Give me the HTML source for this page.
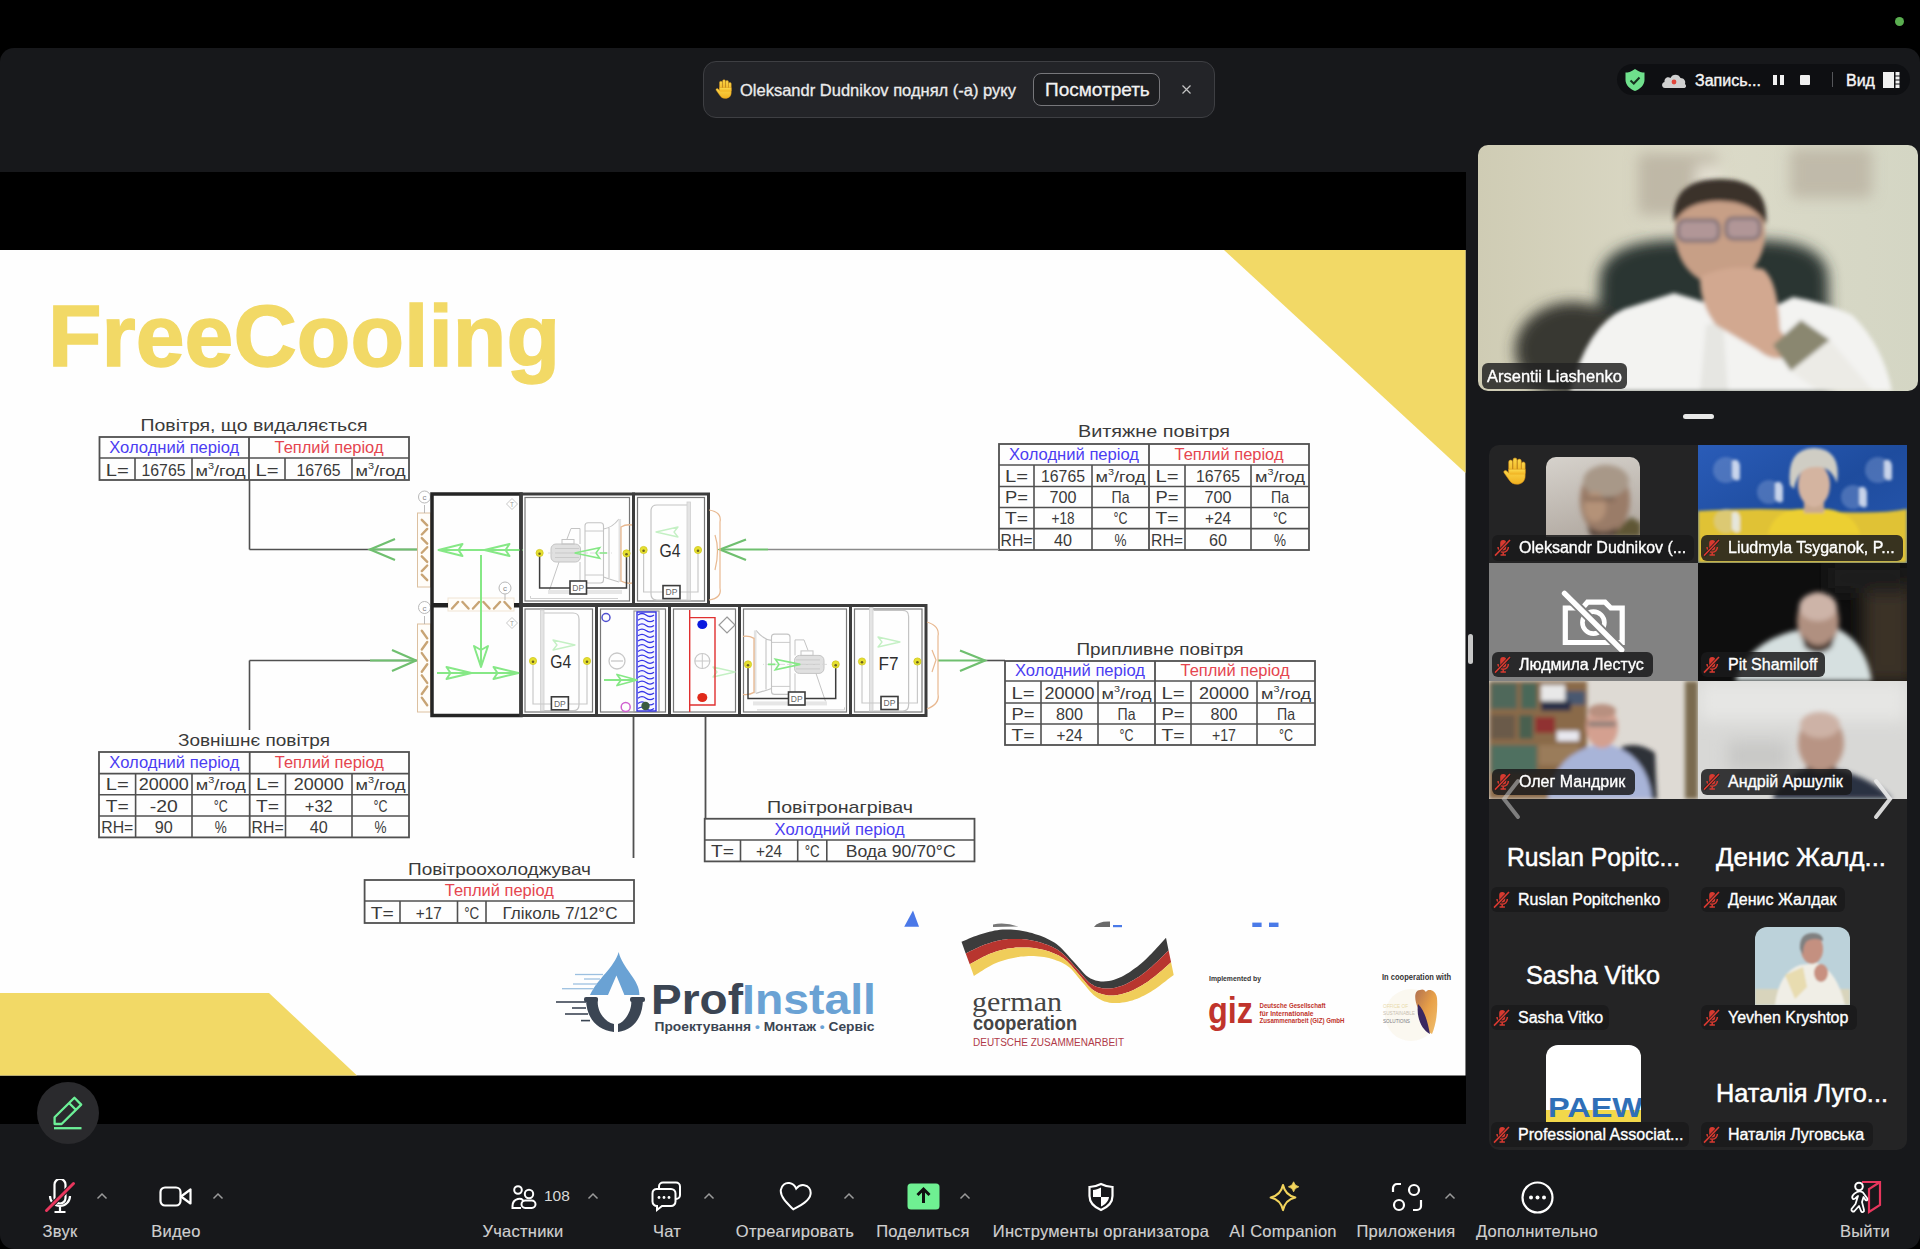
<!DOCTYPE html>
<html><head><meta charset="utf-8">
<style>
html,body{margin:0;padding:0;}
body{width:1920px;height:1249px;background:#000;overflow:hidden;position:relative;font-family:"Liberation Sans", sans-serif;}
.abs{position:absolute;}
.lbl{position:absolute;background:rgba(26,26,27,0.85);border-radius:6px;color:#fff;font-size:16px;line-height:19px;white-space:nowrap;-webkit-text-stroke:0.35px #fff;}
.big{position:absolute;height:34px;}
</style></head><body>
<div class="abs" style="left:1894.5px;top:16.5px;width:9px;height:9px;border-radius:50%;background:#5aae50"></div>
<div class="abs" style="left:0;top:48px;width:1920px;height:1201px;background:#17181b;border-radius:14px"></div>
<!-- notification -->
<div class="abs" style="left:703px;top:61px;width:510px;height:55px;background:#232428;border:1px solid #3e3f43;border-radius:13px"></div>
<svg class="abs" style="left:714px;top:79px" width="20" height="20" viewBox="0 0 24 24"><defs><linearGradient id="hg2" x1="0" y1="0" x2="0" y2="1"><stop offset="0" stop-color="#fbd84a"/><stop offset="1" stop-color="#f0b020"/></linearGradient></defs><g fill="url(#hg2)" stroke="#d08c18" stroke-width="0.5"><rect x="6.6" y="2.6" width="3.4" height="12" rx="1.7"/><rect x="10.3" y="0.8" width="3.4" height="13" rx="1.7"/><rect x="14" y="1.8" width="3.4" height="12.5" rx="1.7"/><rect x="17.5" y="4.2" width="3.2" height="11" rx="1.6"/><path d="M6.6 10.5 H20.7 V16.5 C20.7 20.8 17.6 23.4 13.6 23.4 C10.3 23.4 8.4 21.8 6.8 19.4 L2.6 13.6 C1.8 12.3 3.3 10.9 4.6 11.8 L6.8 13.8 Z"/></g><path d="M7.2 11 H20.2 V15 H7.2 Z" fill="url(#hg2)"/></svg>
<div class="abs" style="left:740px;top:80px;font-size:16.5px;line-height:20px;color:#ececec;white-space:nowrap;-webkit-text-stroke:0.3px #ececec">Oleksandr Dudnikov поднял (-а) руку</div>
<div class="abs" style="left:1033px;top:73px;width:125px;height:31px;border:1.5px solid #77777b;border-radius:8px;background:#1d1e21"></div>
<div class="abs" style="left:1045px;top:79px;font-size:19px;line-height:22px;color:#f2f2f2;white-space:nowrap;-webkit-text-stroke:0.3px #f2f2f2">Посмотреть</div>
<svg class="abs" style="left:1180px;top:83px" width="13" height="13"><path d="M2.5 2.5 L10.5 10.5 M10.5 2.5 L2.5 10.5" stroke="#c4c4c4" stroke-width="1.2"/></svg>
<!-- record box -->
<div class="abs" style="left:1617px;top:64px;width:293px;height:31px;background:#0e0f12;border-radius:16px"></div>
<svg class="abs" style="left:1622px;top:67px" width="26" height="26"><path d="M13 2 C9 5 6 5.5 3.5 5.5 V13 C3.5 18 8 22 13 24 C18 22 22.5 18 22.5 13 V5.5 C20 5.5 17 5 13 2 Z" fill="#6fe08c"/><path d="M8.5 13.5 L11.8 16.5 L17.5 10.5" fill="none" stroke="#17321f" stroke-width="2"/></svg>
<svg class="abs" style="left:1660px;top:69px" width="28" height="22"><path d="M5 19 C1.5 19 1 14 4.5 13 C4 9 8 7 10.5 9 C12 4.5 19 4.5 20.5 9 C24 9 26 12 25 15 C27 17 26 19 23.5 19 Z" fill="#d0d0d0"/><circle cx="14" cy="13" r="2.4" fill="#e0453a"/></svg>
<div class="abs" style="left:1695px;top:71px;font-size:16px;line-height:19px;color:#f5f5f5;white-space:nowrap;-webkit-text-stroke:0.4px #f5f5f5">Запись...</div>
<div class="abs" style="left:1773px;top:75px;width:4px;height:10px;background:#f0f0f0"></div>
<div class="abs" style="left:1780px;top:75px;width:4px;height:10px;background:#f0f0f0"></div>
<div class="abs" style="left:1800px;top:75px;width:10px;height:10px;background:#f0f0f0;border-radius:1px"></div>
<div class="abs" style="left:1831.5px;top:72px;width:1px;height:15px;background:#55565a"></div>
<div class="abs" style="left:1846px;top:71px;font-size:16px;line-height:19px;color:#f5f5f5;-webkit-text-stroke:0.4px #f5f5f5">Вид</div>
<svg class="abs" style="left:1883px;top:72px" width="17" height="16"><rect x="0" y="0" width="11" height="16" fill="#f0f0f0"/><rect x="12.5" y="0" width="4" height="3.5" fill="#f0f0f0"/><rect x="12.5" y="4.5" width="4" height="3" fill="#f0f0f0"/><rect x="12.5" y="8.5" width="4" height="3" fill="#f0f0f0"/><rect x="12.5" y="12.5" width="4" height="3.5" fill="#f0f0f0"/></svg>
<!-- share area -->
<div class="abs" style="left:0;top:172px;width:1465.5px;height:952px;background:#000"></div>
<svg class="abs" style="left:0;top:0;font-family:'Liberation Sans', sans-serif" width="1920" height="1249">
<rect x="0" y="250" width="1465.5" height="825.5" fill="#fefefe"/>
<path d="M1224 250 L1465.5 250 L1465.5 473 Z" fill="#f2d966"/>
<path d="M0 993 L269 993 L357 1075.5 L0 1075.5 Z" fill="#f2d966"/>
<text x="48" y="366" font-size="87" font-weight="bold" fill="#f2d966" stroke="#f2d966" stroke-width="1.4" textLength="512" lengthAdjust="spacingAndGlyphs">FreeCooling</text>
<text x="254" y="431" font-size="17" fill="#3a3a3a" text-anchor="middle" font-weight="normal" textLength="227" lengthAdjust="spacingAndGlyphs" >Повітря, що видаляється</text>
<rect x="99.5" y="437" width="309.5" height="43" stroke="#505050" stroke-width="1.8" fill="none" />
<line x1="99.5" y1="458" x2="409" y2="458" stroke="#505050" stroke-width="1.6" />
<line x1="249" y1="437" x2="249" y2="480" stroke="#505050" stroke-width="1.8" />
<text x="174.25" y="452.5" font-size="16" fill="#4b3df2" text-anchor="middle" font-weight="normal" textLength="130" lengthAdjust="spacingAndGlyphs" >Холодний період</text>
<text x="329.0" y="452.5" font-size="16" fill="#e5454f" text-anchor="middle" font-weight="normal" textLength="109" lengthAdjust="spacingAndGlyphs" >Теплий період</text>
<line x1="135" y1="458" x2="135" y2="480" stroke="#505050" stroke-width="1.6" />
<line x1="192" y1="458" x2="192" y2="480" stroke="#505050" stroke-width="1.6" />
<line x1="285" y1="458" x2="285" y2="480" stroke="#505050" stroke-width="1.6" />
<line x1="352" y1="458" x2="352" y2="480" stroke="#505050" stroke-width="1.6" />
<text x="117.25" y="475.5" font-size="16.5" fill="#3a3a3a" text-anchor="middle" font-weight="normal" textLength="23" lengthAdjust="spacingAndGlyphs" >L=</text>
<text x="163.5" y="475.5" font-size="16.5" fill="#3a3a3a" text-anchor="middle" font-weight="normal" textLength="44" lengthAdjust="spacingAndGlyphs" >16765</text>
<text x="220.5" y="475.5" font-size="15" fill="#3a3a3a" text-anchor="middle" textLength="50" lengthAdjust="spacingAndGlyphs">м<tspan font-size="9.0" dy="-7">3</tspan><tspan dy="7">/год</tspan></text>
<text x="267.0" y="475.5" font-size="16.5" fill="#3a3a3a" text-anchor="middle" font-weight="normal" textLength="23" lengthAdjust="spacingAndGlyphs" >L=</text>
<text x="318.5" y="475.5" font-size="16.5" fill="#3a3a3a" text-anchor="middle" font-weight="normal" textLength="44" lengthAdjust="spacingAndGlyphs" >16765</text>
<text x="380.5" y="475.5" font-size="15" fill="#3a3a3a" text-anchor="middle" textLength="50" lengthAdjust="spacingAndGlyphs">м<tspan font-size="9.0" dy="-7">3</tspan><tspan dy="7">/год</tspan></text>
<text x="1154" y="437" font-size="17" fill="#3a3a3a" text-anchor="middle" font-weight="normal" textLength="152" lengthAdjust="spacingAndGlyphs" >Витяжне повітря</text>
<rect x="999" y="444" width="310" height="106" stroke="#505050" stroke-width="1.8" fill="none" />
<line x1="999" y1="465" x2="1309" y2="465" stroke="#505050" stroke-width="1.6" />
<line x1="999" y1="486.5" x2="1309" y2="486.5" stroke="#505050" stroke-width="1.6" />
<line x1="999" y1="507.5" x2="1309" y2="507.5" stroke="#505050" stroke-width="1.6" />
<line x1="999" y1="528.6" x2="1309" y2="528.6" stroke="#505050" stroke-width="1.6" />
<line x1="1149" y1="444" x2="1149" y2="550" stroke="#505050" stroke-width="1.8" />
<text x="1074.0" y="459.5" font-size="16" fill="#4b3df2" text-anchor="middle" font-weight="normal" textLength="130" lengthAdjust="spacingAndGlyphs" >Холодний період</text>
<text x="1229.0" y="459.5" font-size="16" fill="#e5454f" text-anchor="middle" font-weight="normal" textLength="109" lengthAdjust="spacingAndGlyphs" >Теплий період</text>
<line x1="1034" y1="465" x2="1034" y2="550" stroke="#505050" stroke-width="1.6" />
<line x1="1092" y1="465" x2="1092" y2="550" stroke="#505050" stroke-width="1.6" />
<line x1="1185" y1="465" x2="1185" y2="550" stroke="#505050" stroke-width="1.6" />
<line x1="1251" y1="465" x2="1251" y2="550" stroke="#505050" stroke-width="1.6" />
<text x="1016.5" y="482.0" font-size="16.5" fill="#3a3a3a" text-anchor="middle" font-weight="normal" textLength="23" lengthAdjust="spacingAndGlyphs" >L=</text>
<text x="1063.0" y="482.0" font-size="16.5" fill="#3a3a3a" text-anchor="middle" font-weight="normal" textLength="44" lengthAdjust="spacingAndGlyphs" >16765</text>
<text x="1120.5" y="482.0" font-size="15" fill="#3a3a3a" text-anchor="middle" textLength="50" lengthAdjust="spacingAndGlyphs">м<tspan font-size="9.0" dy="-7">3</tspan><tspan dy="7">/год</tspan></text>
<text x="1167.0" y="482.0" font-size="16.5" fill="#3a3a3a" text-anchor="middle" font-weight="normal" textLength="23" lengthAdjust="spacingAndGlyphs" >L=</text>
<text x="1218.0" y="482.0" font-size="16.5" fill="#3a3a3a" text-anchor="middle" font-weight="normal" textLength="44" lengthAdjust="spacingAndGlyphs" >16765</text>
<text x="1280.0" y="482.0" font-size="15" fill="#3a3a3a" text-anchor="middle" textLength="50" lengthAdjust="spacingAndGlyphs">м<tspan font-size="9.0" dy="-7">3</tspan><tspan dy="7">/год</tspan></text>
<text x="1016.5" y="503.0" font-size="16.5" fill="#3a3a3a" text-anchor="middle" font-weight="normal" textLength="23" lengthAdjust="spacingAndGlyphs" >P=</text>
<text x="1063.0" y="503.0" font-size="16.5" fill="#3a3a3a" text-anchor="middle" font-weight="normal" textLength="27" lengthAdjust="spacingAndGlyphs" >700</text>
<text x="1120.5" y="503.0" font-size="16.5" fill="#3a3a3a" text-anchor="middle" font-weight="normal" textLength="18" lengthAdjust="spacingAndGlyphs" >Па</text>
<text x="1167.0" y="503.0" font-size="16.5" fill="#3a3a3a" text-anchor="middle" font-weight="normal" textLength="23" lengthAdjust="spacingAndGlyphs" >P=</text>
<text x="1218.0" y="503.0" font-size="16.5" fill="#3a3a3a" text-anchor="middle" font-weight="normal" textLength="27" lengthAdjust="spacingAndGlyphs" >700</text>
<text x="1280.0" y="503.0" font-size="16.5" fill="#3a3a3a" text-anchor="middle" font-weight="normal" textLength="18" lengthAdjust="spacingAndGlyphs" >Па</text>
<text x="1016.5" y="524.1" font-size="16.5" fill="#3a3a3a" text-anchor="middle" font-weight="normal" textLength="23" lengthAdjust="spacingAndGlyphs" >T=</text>
<text x="1063.0" y="524.1" font-size="16.5" fill="#3a3a3a" text-anchor="middle" font-weight="normal" textLength="23" lengthAdjust="spacingAndGlyphs" >+18</text>
<text x="1120.5" y="524.1" font-size="16.5" fill="#3a3a3a" text-anchor="middle" font-weight="normal" textLength="14" lengthAdjust="spacingAndGlyphs" >°C</text>
<text x="1167.0" y="524.1" font-size="16.5" fill="#3a3a3a" text-anchor="middle" font-weight="normal" textLength="23" lengthAdjust="spacingAndGlyphs" >T=</text>
<text x="1218.0" y="524.1" font-size="16.5" fill="#3a3a3a" text-anchor="middle" font-weight="normal" textLength="26" lengthAdjust="spacingAndGlyphs" >+24</text>
<text x="1280.0" y="524.1" font-size="16.5" fill="#3a3a3a" text-anchor="middle" font-weight="normal" textLength="14" lengthAdjust="spacingAndGlyphs" >°C</text>
<text x="1016.5" y="545.5" font-size="16.5" fill="#3a3a3a" text-anchor="middle" font-weight="normal" textLength="32" lengthAdjust="spacingAndGlyphs" >RH=</text>
<text x="1063.0" y="545.5" font-size="16.5" fill="#3a3a3a" text-anchor="middle" font-weight="normal" textLength="18" lengthAdjust="spacingAndGlyphs" >40</text>
<text x="1120.5" y="545.5" font-size="16.5" fill="#3a3a3a" text-anchor="middle" font-weight="normal" textLength="12" lengthAdjust="spacingAndGlyphs" >%</text>
<text x="1167.0" y="545.5" font-size="16.5" fill="#3a3a3a" text-anchor="middle" font-weight="normal" textLength="32" lengthAdjust="spacingAndGlyphs" >RH=</text>
<text x="1218.0" y="545.5" font-size="16.5" fill="#3a3a3a" text-anchor="middle" font-weight="normal" textLength="18" lengthAdjust="spacingAndGlyphs" >60</text>
<text x="1280.0" y="545.5" font-size="16.5" fill="#3a3a3a" text-anchor="middle" font-weight="normal" textLength="12" lengthAdjust="spacingAndGlyphs" >%</text>
<text x="1160" y="655" font-size="17" fill="#3a3a3a" text-anchor="middle" font-weight="normal" textLength="167" lengthAdjust="spacingAndGlyphs" >Припливне повітря</text>
<rect x="1005" y="661" width="310" height="84" stroke="#505050" stroke-width="1.8" fill="none" />
<line x1="1005" y1="681" x2="1315" y2="681" stroke="#505050" stroke-width="1.6" />
<line x1="1005" y1="703" x2="1315" y2="703" stroke="#505050" stroke-width="1.6" />
<line x1="1005" y1="724" x2="1315" y2="724" stroke="#505050" stroke-width="1.6" />
<line x1="1155" y1="661" x2="1155" y2="745" stroke="#505050" stroke-width="1.8" />
<text x="1080.0" y="675.5" font-size="16" fill="#4b3df2" text-anchor="middle" font-weight="normal" textLength="130" lengthAdjust="spacingAndGlyphs" >Холодний період</text>
<text x="1235.0" y="675.5" font-size="16" fill="#e5454f" text-anchor="middle" font-weight="normal" textLength="109" lengthAdjust="spacingAndGlyphs" >Теплий період</text>
<line x1="1041" y1="681" x2="1041" y2="745" stroke="#505050" stroke-width="1.6" />
<line x1="1098" y1="681" x2="1098" y2="745" stroke="#505050" stroke-width="1.6" />
<line x1="1191" y1="681" x2="1191" y2="745" stroke="#505050" stroke-width="1.6" />
<line x1="1257" y1="681" x2="1257" y2="745" stroke="#505050" stroke-width="1.6" />
<text x="1023.0" y="698.5" font-size="16.5" fill="#3a3a3a" text-anchor="middle" font-weight="normal" textLength="23" lengthAdjust="spacingAndGlyphs" >L=</text>
<text x="1069.5" y="698.5" font-size="16.5" fill="#3a3a3a" text-anchor="middle" font-weight="normal" textLength="50" lengthAdjust="spacingAndGlyphs" >20000</text>
<text x="1126.5" y="698.5" font-size="15" fill="#3a3a3a" text-anchor="middle" textLength="50" lengthAdjust="spacingAndGlyphs">м<tspan font-size="9.0" dy="-7">3</tspan><tspan dy="7">/год</tspan></text>
<text x="1173.0" y="698.5" font-size="16.5" fill="#3a3a3a" text-anchor="middle" font-weight="normal" textLength="23" lengthAdjust="spacingAndGlyphs" >L=</text>
<text x="1224.0" y="698.5" font-size="16.5" fill="#3a3a3a" text-anchor="middle" font-weight="normal" textLength="50" lengthAdjust="spacingAndGlyphs" >20000</text>
<text x="1286.0" y="698.5" font-size="15" fill="#3a3a3a" text-anchor="middle" textLength="50" lengthAdjust="spacingAndGlyphs">м<tspan font-size="9.0" dy="-7">3</tspan><tspan dy="7">/год</tspan></text>
<text x="1023.0" y="719.5" font-size="16.5" fill="#3a3a3a" text-anchor="middle" font-weight="normal" textLength="23" lengthAdjust="spacingAndGlyphs" >P=</text>
<text x="1069.5" y="719.5" font-size="16.5" fill="#3a3a3a" text-anchor="middle" font-weight="normal" textLength="27" lengthAdjust="spacingAndGlyphs" >800</text>
<text x="1126.5" y="719.5" font-size="16.5" fill="#3a3a3a" text-anchor="middle" font-weight="normal" textLength="18" lengthAdjust="spacingAndGlyphs" >Па</text>
<text x="1173.0" y="719.5" font-size="16.5" fill="#3a3a3a" text-anchor="middle" font-weight="normal" textLength="23" lengthAdjust="spacingAndGlyphs" >P=</text>
<text x="1224.0" y="719.5" font-size="16.5" fill="#3a3a3a" text-anchor="middle" font-weight="normal" textLength="27" lengthAdjust="spacingAndGlyphs" >800</text>
<text x="1286.0" y="719.5" font-size="16.5" fill="#3a3a3a" text-anchor="middle" font-weight="normal" textLength="18" lengthAdjust="spacingAndGlyphs" >Па</text>
<text x="1023.0" y="740.5" font-size="16.5" fill="#3a3a3a" text-anchor="middle" font-weight="normal" textLength="23" lengthAdjust="spacingAndGlyphs" >T=</text>
<text x="1069.5" y="740.5" font-size="16.5" fill="#3a3a3a" text-anchor="middle" font-weight="normal" textLength="26" lengthAdjust="spacingAndGlyphs" >+24</text>
<text x="1126.5" y="740.5" font-size="16.5" fill="#3a3a3a" text-anchor="middle" font-weight="normal" textLength="14" lengthAdjust="spacingAndGlyphs" >°C</text>
<text x="1173.0" y="740.5" font-size="16.5" fill="#3a3a3a" text-anchor="middle" font-weight="normal" textLength="23" lengthAdjust="spacingAndGlyphs" >T=</text>
<text x="1224.0" y="740.5" font-size="16.5" fill="#3a3a3a" text-anchor="middle" font-weight="normal" textLength="24" lengthAdjust="spacingAndGlyphs" >+17</text>
<text x="1286.0" y="740.5" font-size="16.5" fill="#3a3a3a" text-anchor="middle" font-weight="normal" textLength="14" lengthAdjust="spacingAndGlyphs" >°C</text>
<text x="254" y="746" font-size="17" fill="#3a3a3a" text-anchor="middle" font-weight="normal" textLength="152" lengthAdjust="spacingAndGlyphs" >Зовнішнє повітря</text>
<rect x="99" y="752" width="310" height="85.39999999999998" stroke="#505050" stroke-width="1.8" fill="none" />
<line x1="99" y1="773.6" x2="409" y2="773.6" stroke="#505050" stroke-width="1.6" />
<line x1="99" y1="794.7" x2="409" y2="794.7" stroke="#505050" stroke-width="1.6" />
<line x1="99" y1="816" x2="409" y2="816" stroke="#505050" stroke-width="1.6" />
<line x1="249.7" y1="752" x2="249.7" y2="837.4" stroke="#505050" stroke-width="1.8" />
<text x="174.35" y="768.1" font-size="16" fill="#4b3df2" text-anchor="middle" font-weight="normal" textLength="130" lengthAdjust="spacingAndGlyphs" >Холодний період</text>
<text x="329.35" y="768.1" font-size="16" fill="#e5454f" text-anchor="middle" font-weight="normal" textLength="109" lengthAdjust="spacingAndGlyphs" >Теплий період</text>
<line x1="135.6" y1="773.6" x2="135.6" y2="837.4" stroke="#505050" stroke-width="1.6" />
<line x1="192" y1="773.6" x2="192" y2="837.4" stroke="#505050" stroke-width="1.6" />
<line x1="285.5" y1="773.6" x2="285.5" y2="837.4" stroke="#505050" stroke-width="1.6" />
<line x1="352" y1="773.6" x2="352" y2="837.4" stroke="#505050" stroke-width="1.6" />
<text x="117.3" y="790.2" font-size="16.5" fill="#3a3a3a" text-anchor="middle" font-weight="normal" textLength="23" lengthAdjust="spacingAndGlyphs" >L=</text>
<text x="163.8" y="790.2" font-size="16.5" fill="#3a3a3a" text-anchor="middle" font-weight="normal" textLength="50" lengthAdjust="spacingAndGlyphs" >20000</text>
<text x="220.85" y="790.2" font-size="15" fill="#3a3a3a" text-anchor="middle" textLength="50" lengthAdjust="spacingAndGlyphs">м<tspan font-size="9.0" dy="-7">3</tspan><tspan dy="7">/год</tspan></text>
<text x="267.6" y="790.2" font-size="16.5" fill="#3a3a3a" text-anchor="middle" font-weight="normal" textLength="23" lengthAdjust="spacingAndGlyphs" >L=</text>
<text x="318.75" y="790.2" font-size="16.5" fill="#3a3a3a" text-anchor="middle" font-weight="normal" textLength="50" lengthAdjust="spacingAndGlyphs" >20000</text>
<text x="380.5" y="790.2" font-size="15" fill="#3a3a3a" text-anchor="middle" textLength="50" lengthAdjust="spacingAndGlyphs">м<tspan font-size="9.0" dy="-7">3</tspan><tspan dy="7">/год</tspan></text>
<text x="117.3" y="811.5" font-size="16.5" fill="#3a3a3a" text-anchor="middle" font-weight="normal" textLength="23" lengthAdjust="spacingAndGlyphs" >T=</text>
<text x="163.8" y="811.5" font-size="16.5" fill="#3a3a3a" text-anchor="middle" font-weight="normal" textLength="28" lengthAdjust="spacingAndGlyphs" >-20</text>
<text x="220.85" y="811.5" font-size="16.5" fill="#3a3a3a" text-anchor="middle" font-weight="normal" textLength="14" lengthAdjust="spacingAndGlyphs" >°C</text>
<text x="267.6" y="811.5" font-size="16.5" fill="#3a3a3a" text-anchor="middle" font-weight="normal" textLength="23" lengthAdjust="spacingAndGlyphs" >T=</text>
<text x="318.75" y="811.5" font-size="16.5" fill="#3a3a3a" text-anchor="middle" font-weight="normal" textLength="28" lengthAdjust="spacingAndGlyphs" >+32</text>
<text x="380.5" y="811.5" font-size="16.5" fill="#3a3a3a" text-anchor="middle" font-weight="normal" textLength="14" lengthAdjust="spacingAndGlyphs" >°C</text>
<text x="117.3" y="832.9" font-size="16.5" fill="#3a3a3a" text-anchor="middle" font-weight="normal" textLength="32" lengthAdjust="spacingAndGlyphs" >RH=</text>
<text x="163.8" y="832.9" font-size="16.5" fill="#3a3a3a" text-anchor="middle" font-weight="normal" textLength="18" lengthAdjust="spacingAndGlyphs" >90</text>
<text x="220.85" y="832.9" font-size="16.5" fill="#3a3a3a" text-anchor="middle" font-weight="normal" textLength="12" lengthAdjust="spacingAndGlyphs" >%</text>
<text x="267.6" y="832.9" font-size="16.5" fill="#3a3a3a" text-anchor="middle" font-weight="normal" textLength="32" lengthAdjust="spacingAndGlyphs" >RH=</text>
<text x="318.75" y="832.9" font-size="16.5" fill="#3a3a3a" text-anchor="middle" font-weight="normal" textLength="18" lengthAdjust="spacingAndGlyphs" >40</text>
<text x="380.5" y="832.9" font-size="16.5" fill="#3a3a3a" text-anchor="middle" font-weight="normal" textLength="12" lengthAdjust="spacingAndGlyphs" >%</text>
<text x="499.5" y="875" font-size="17" fill="#3a3a3a" text-anchor="middle" font-weight="normal" textLength="183" lengthAdjust="spacingAndGlyphs" >Повітроохолоджувач</text>
<rect x="364.6" y="880" width="269.4" height="43" stroke="#505050" stroke-width="1.8" fill="none" />
<line x1="364.6" y1="901" x2="634" y2="901" stroke="#505050" stroke-width="1.6" />
<text x="499.3" y="895.5" font-size="16" fill="#e5454f" text-anchor="middle" font-weight="normal" textLength="109" lengthAdjust="spacingAndGlyphs" >Теплий період</text>
<line x1="400" y1="901" x2="400" y2="923" stroke="#505050" stroke-width="1.6" />
<line x1="457.5" y1="901" x2="457.5" y2="923" stroke="#505050" stroke-width="1.6" />
<line x1="486" y1="901" x2="486" y2="923" stroke="#505050" stroke-width="1.6" />
<text x="382.3" y="918.5" font-size="16.5" fill="#3a3a3a" text-anchor="middle" font-weight="normal" textLength="23" lengthAdjust="spacingAndGlyphs" >T=</text>
<text x="428.75" y="918.5" font-size="16.5" fill="#3a3a3a" text-anchor="middle" font-weight="normal" textLength="26" lengthAdjust="spacingAndGlyphs" >+17</text>
<text x="471.75" y="918.5" font-size="16.5" fill="#3a3a3a" text-anchor="middle" font-weight="normal" textLength="15" lengthAdjust="spacingAndGlyphs" >°C</text>
<text x="560.0" y="918.5" font-size="16.5" fill="#3a3a3a" text-anchor="middle" font-weight="normal" textLength="115" lengthAdjust="spacingAndGlyphs" >Гліколь 7/12°C</text>
<text x="840" y="813" font-size="17" fill="#3a3a3a" text-anchor="middle" font-weight="normal" textLength="146" lengthAdjust="spacingAndGlyphs" >Повітронагрівач</text>
<rect x="704.7" y="818.75" width="269.79999999999995" height="42.64999999999998" stroke="#505050" stroke-width="1.8" fill="none" />
<line x1="704.7" y1="840" x2="974.5" y2="840" stroke="#505050" stroke-width="1.6" />
<text x="839.6" y="834.5" font-size="16" fill="#4b3df2" text-anchor="middle" font-weight="normal" textLength="130" lengthAdjust="spacingAndGlyphs" >Холодний період</text>
<line x1="740.5" y1="840" x2="740.5" y2="861.4" stroke="#505050" stroke-width="1.6" />
<line x1="797.7" y1="840" x2="797.7" y2="861.4" stroke="#505050" stroke-width="1.6" />
<line x1="826.8" y1="840" x2="826.8" y2="861.4" stroke="#505050" stroke-width="1.6" />
<text x="722.6" y="856.9" font-size="16.5" fill="#3a3a3a" text-anchor="middle" font-weight="normal" textLength="23" lengthAdjust="spacingAndGlyphs" >T=</text>
<text x="769.1" y="856.9" font-size="16.5" fill="#3a3a3a" text-anchor="middle" font-weight="normal" textLength="26" lengthAdjust="spacingAndGlyphs" >+24</text>
<text x="812.25" y="856.9" font-size="16.5" fill="#3a3a3a" text-anchor="middle" font-weight="normal" textLength="15" lengthAdjust="spacingAndGlyphs" >°C</text>
<text x="900.65" y="856.9" font-size="16.5" fill="#3a3a3a" text-anchor="middle" font-weight="normal" textLength="110" lengthAdjust="spacingAndGlyphs" >Вода 90/70°C</text>
<line x1="249.5" y1="480" x2="249.5" y2="549.5" stroke="#505050" stroke-width="1.6" />
<line x1="249.5" y1="549.5" x2="418" y2="549.5" stroke="#505050" stroke-width="1.6" />
<line x1="249.5" y1="730" x2="249.5" y2="660.5" stroke="#505050" stroke-width="1.6" />
<line x1="249.5" y1="660.5" x2="418" y2="660.5" stroke="#505050" stroke-width="1.6" />
<line x1="768" y1="549.5" x2="999" y2="549.5" stroke="#8a8a8a" stroke-width="1.6" />
<line x1="720" y1="549.5" x2="768" y2="549.5" stroke="#6fbf6f" stroke-width="2" />
<line x1="938" y1="660.5" x2="985" y2="660.5" stroke="#6fbf6f" stroke-width="2.2" />
<line x1="985" y1="660.5" x2="1005" y2="660.5" stroke="#505050" stroke-width="1.6" />
<line x1="633.5" y1="715" x2="633.5" y2="858" stroke="#505050" stroke-width="1.8" />
<line x1="705.5" y1="715" x2="705.5" y2="818.75" stroke="#505050" stroke-width="1.8" />
<line x1="370" y1="549.5" x2="418" y2="549.5" stroke="#6fbf6f" stroke-width="2.2" />
<path d="M395 539 L370 549.5 L395 560" fill="none" stroke="#6fbf6f" stroke-width="2.2"/>
<path d="M746 539.5 L720 549.5 L746 560" fill="none" stroke="#6fbf6f" stroke-width="2.2"/>
<line x1="370" y1="660.5" x2="416" y2="660.5" stroke="#6fbf6f" stroke-width="2.2" />
<path d="M392 650 L416 660.5 L392 671" fill="none" stroke="#6fbf6f" stroke-width="2.2"/>
<path d="M960 650.5 L985 660.5 L960 671" fill="none" stroke="#6fbf6f" stroke-width="2.2"/>
<rect x="417.5" y="513" width="13" height="74" fill="#fffdf9" stroke="#dcc0a0" stroke-width="1"/>
<path d="M421.8 519.8 L427.2 525.3428571428572 M427.2 528.9428571428571 L421.8 534.4857142857143 M421.8 538.0857142857143 L427.2 543.6285714285715 M427.2 547.2285714285714 L421.8 552.7714285714286 M421.8 556.3714285714285 L427.2 561.9142857142857 M427.2 565.5142857142856 L421.8 571.0571428571428 M421.8 574.6571428571428 L427.2 580.2 " fill="none" stroke="#c8a474" stroke-width="2.4" stroke-linecap="round"/>
<line x1="424.5" y1="505" x2="424.5" y2="513" stroke="#aaa" stroke-width="0.8"/>
<rect x="417.5" y="624" width="13" height="88" fill="#fffdf9" stroke="#dcc0a0" stroke-width="1"/>
<path d="M421.8 630.8 L427.2 638.3428571428572 M427.2 641.9428571428571 L421.8 649.4857142857143 M421.8 653.0857142857143 L427.2 660.6285714285715 M427.2 664.2285714285714 L421.8 671.7714285714286 M421.8 675.3714285714285 L427.2 682.9142857142857 M427.2 686.5142857142856 L421.8 694.0571428571428 M421.8 697.6571428571428 L427.2 705.2 " fill="none" stroke="#c8a474" stroke-width="2.4" stroke-linecap="round"/>
<line x1="424.5" y1="616" x2="424.5" y2="624" stroke="#aaa" stroke-width="0.8"/>
<rect x="448" y="598" width="66" height="13" fill="#fffdf9" stroke="#f0e4d4" stroke-width="1"/>
<path d="M452.0 608.5 L458.0 602 M462.5 602 L468.5 608.5 M473.0 608.5 L479.0 602 M483.5 602 L489.5 608.5 M494.0 608.5 L500.0 602 M504.5 602 L510.5 608.5 " fill="none" stroke="#c8a474" stroke-width="2.4" stroke-linecap="round"/>
<line x1="505" y1="594" x2="505" y2="600" stroke="#aaa" stroke-width="0.8"/>
<rect x="432" y="603" width="16" height="4.5" fill="#222"/>
<rect x="514" y="603" width="8" height="4.5" fill="#222"/>
<circle cx="424.5" cy="497" r="6" fill="#fff" stroke="#b8b8b8" stroke-width="1"/>
<text x="424.5" y="500" font-size="8" fill="#888" text-anchor="middle">c</text>
<circle cx="424.5" cy="607.5" r="6" fill="#fff" stroke="#b8b8b8" stroke-width="1"/>
<text x="424.5" y="610.5" font-size="8" fill="#888" text-anchor="middle">c</text>
<circle cx="505" cy="588" r="6" fill="#fff" stroke="#b8b8b8" stroke-width="1"/>
<text x="505" y="591" font-size="8" fill="#888" text-anchor="middle">c</text>
<rect x="432" y="494" width="89" height="221.5" fill="none" stroke="#252525" stroke-width="3.5"/>
<path d="M512 498.5 L517.5 504 L512 509.5 L506.5 504 Z" fill="#fff" stroke="#c8c8c8" stroke-width="1" stroke-linejoin="round"/>
<text x="512" y="506.5" font-size="6.5" fill="#999" text-anchor="middle">T</text>
<path d="M512 617.5 L517.5 623 L512 628.5 L506.5 623 Z" fill="#fff" stroke="#c8c8c8" stroke-width="1" stroke-linejoin="round"/>
<text x="512" y="625.5" font-size="6.5" fill="#999" text-anchor="middle">T</text>
<line x1="438" y1="550" x2="523" y2="550" stroke="#86e886" stroke-width="2" />
<path d="M438.5 550 L462.5 544 L458.5 550 L462.5 556 Z" fill="none" stroke="#86e886" stroke-width="2" stroke-linejoin="round"/>
<path d="M484.5 550 L509.5 544 L505.5 550 L509.5 556 Z" fill="none" stroke="#86e886" stroke-width="2" stroke-linejoin="round"/>
<line x1="481" y1="555" x2="481" y2="667" stroke="#86e886" stroke-width="2" />
<path d="M481 667 L474 646 L481 650 L488 646 Z" fill="none" stroke="#86e886" stroke-width="2" stroke-linejoin="round"/>
<line x1="437" y1="673" x2="519" y2="673" stroke="#86e886" stroke-width="2" />
<path d="M471.5 673 L446.5 667 L450.5 673 L446.5 679 Z" fill="none" stroke="#86e886" stroke-width="2" stroke-linejoin="round"/>
<path d="M518.5 673 L493.5 667 L497.5 673 L493.5 679 Z" fill="none" stroke="#86e886" stroke-width="2" stroke-linejoin="round"/>
<rect x="521" y="494" width="112.5" height="110.5" fill="none" stroke="#3c3c3c" stroke-width="3"/>
<rect x="525" y="497.5" width="104.5" height="103.5" fill="none" stroke="#777" stroke-width="1.2"/>
<rect x="633.5" y="494" width="75.0" height="110.5" fill="none" stroke="#3c3c3c" stroke-width="3"/>
<rect x="637.5" y="497.5" width="67.0" height="103.5" fill="none" stroke="#777" stroke-width="1.2"/>
<rect x="521" y="605.5" width="75.5" height="110.0" fill="none" stroke="#3c3c3c" stroke-width="3"/>
<rect x="525" y="609.0" width="67.5" height="103.0" fill="none" stroke="#777" stroke-width="1.2"/>
<rect x="596.5" y="605.5" width="73.0" height="110.0" fill="none" stroke="#3c3c3c" stroke-width="3"/>
<rect x="600.5" y="609.0" width="65.0" height="103.0" fill="none" stroke="#777" stroke-width="1.2"/>
<rect x="669.5" y="605.5" width="70.0" height="110.0" fill="none" stroke="#3c3c3c" stroke-width="3"/>
<rect x="673.5" y="609.0" width="62.0" height="103.0" fill="none" stroke="#777" stroke-width="1.2"/>
<rect x="739.5" y="605.5" width="111.0" height="110.0" fill="none" stroke="#3c3c3c" stroke-width="3"/>
<rect x="743.5" y="609.0" width="103.0" height="103.0" fill="none" stroke="#777" stroke-width="1.2"/>
<rect x="850.5" y="605.5" width="75.5" height="110.0" fill="none" stroke="#3c3c3c" stroke-width="3"/>
<rect x="854.5" y="609.0" width="67.5" height="103.0" fill="none" stroke="#777" stroke-width="1.2"/>
<g><rect x="551" y="544" width="29.5" height="18" rx="5" fill="#e0e0e0" stroke="#c4c4c4" stroke-width="1"/><path d="M555 548.5 H579 M555 553 H579 M555 557.5 H579" stroke="#cacaca" stroke-width="1"/><rect x="562" y="539.5" width="12" height="4.5" fill="none" stroke="#c4c4c4" stroke-width="1"/><path d="M567 539 L571 528.5 L580 528.5 L580 544 M559 562 L549.5 590 M580 562 L580 590" fill="none" stroke="#c4c4c4" stroke-width="1"/><rect x="585" y="522.7" width="18.5" height="60.3" rx="3" fill="none" stroke="#c4c4c4" stroke-width="1.1"/><path d="M585 531 H603.5 M585 575 H603.5" stroke="#c4c4c4" stroke-width="0.9"/><path d="M603.5 529 Q612 528 619 519 M603.5 577 Q612 580 619 582 M609 528 V578" fill="none" stroke="#c4c4c4" stroke-width="1.1"/><rect x="618.5" y="519" width="2.6" height="63" fill="#e2e2e2"/><line x1="548" y1="553" x2="612" y2="553" stroke="#d4d4d4" stroke-width="0.8" stroke-dasharray="5 2"/><rect x="548" y="590" width="74" height="4" fill="#e6e6e6"/><path d="M530.5 598.5 H618 M530.5 598.5 V596" fill="none" stroke="#d0d0d0" stroke-width="1"/><path d="M632 525 Q626 524 621 527 V581 Q626 584 632 583" fill="none" stroke="#e8b890" stroke-width="1.3"/><path d="M574.7 553 L599.7 547.7 L596 553 L599.7 558.3 Z M599.7 553 H607" fill="none" stroke="#86e886" stroke-width="1.6"/></g>
<g transform="translate(1375,111.4) scale(-1,1)"><rect x="551" y="544" width="29.5" height="18" rx="5" fill="#e0e0e0" stroke="#c4c4c4" stroke-width="1"/><path d="M555 548.5 H579 M555 553 H579 M555 557.5 H579" stroke="#cacaca" stroke-width="1"/><rect x="562" y="539.5" width="12" height="4.5" fill="none" stroke="#c4c4c4" stroke-width="1"/><path d="M567 539 L571 528.5 L580 528.5 L580 544 M559 562 L549.5 590 M580 562 L580 590" fill="none" stroke="#c4c4c4" stroke-width="1"/><rect x="585" y="522.7" width="18.5" height="60.3" rx="3" fill="none" stroke="#c4c4c4" stroke-width="1.1"/><path d="M585 531 H603.5 M585 575 H603.5" stroke="#c4c4c4" stroke-width="0.9"/><path d="M603.5 529 Q612 528 619 519 M603.5 577 Q612 580 619 582 M609 528 V578" fill="none" stroke="#c4c4c4" stroke-width="1.1"/><rect x="618.5" y="519" width="2.6" height="63" fill="#e2e2e2"/><line x1="548" y1="553" x2="612" y2="553" stroke="#d4d4d4" stroke-width="0.8" stroke-dasharray="5 2"/><rect x="548" y="590" width="74" height="4" fill="#e6e6e6"/><path d="M530.5 598.5 H618 M530.5 598.5 V596" fill="none" stroke="#d0d0d0" stroke-width="1"/><path d="M632 525 Q626 524 621 527 V581 Q626 584 632 583" fill="none" stroke="#e8b890" stroke-width="1.3"/><path d="M574.7 553 L599.7 547.7 L596 553 L599.7 558.3 Z M599.7 553 H607" fill="none" stroke="#86e886" stroke-width="1.6"/></g>
<path d="M539.6 553 V588 H626.5 V553.4" fill="none" stroke="#3c3c3c" stroke-width="1.5"/>
<rect x="570" y="581" width="16.5" height="13" fill="#fff" stroke="#3c3c3c" stroke-width="1.6"/>
<text x="578.25" y="590.8" font-size="8.5" fill="#666" text-anchor="middle">DP</text>
<path d="M748 664.4 V698.6 H835.7 V664.4" fill="none" stroke="#3c3c3c" stroke-width="1.5"/>
<rect x="788.5" y="692" width="16.5" height="13" fill="#fff" stroke="#3c3c3c" stroke-width="1.6"/>
<text x="796.75" y="701.8" font-size="8.5" fill="#666" text-anchor="middle">DP</text>
<path d="M687 505 H657 Q651 505 651 511 V594 Q651 600 657 600 H687" fill="none" stroke="#c4c4c4" stroke-width="1.2"/>
<rect x="687" y="502" width="3.5" height="98" fill="#e4e4e4" stroke="#cfcfcf" stroke-width="0.8"/>
<path d="M643.6 550 V592 H698 V550" fill="none" stroke="#c8c8c8" stroke-width="1.2"/>
<text x="670" y="557.4" font-size="17.5" fill="#2e2e2e" text-anchor="middle" font-weight="normal" textLength="21" lengthAdjust="spacingAndGlyphs" >G4</text>
<rect x="663" y="585.6" width="17" height="13" fill="#fff" stroke="#3c3c3c" stroke-width="1.6"/>
<text x="671.5" y="595.4" font-size="8.5" fill="#666" text-anchor="middle">DP</text>
<path d="M544 613 H573 Q579 613 579 619 V704.7 Q579 710.7 573 710.7 H544" fill="none" stroke="#c4c4c4" stroke-width="1.2"/>
<rect x="540.5" y="610" width="3.5" height="100.70000000000005" fill="#e4e4e4" stroke="#cfcfcf" stroke-width="0.8"/>
<path d="M533 661 V704 H587 V661" fill="none" stroke="#c8c8c8" stroke-width="1.2"/>
<text x="560.7" y="668.4" font-size="17.5" fill="#2e2e2e" text-anchor="middle" font-weight="normal" textLength="21" lengthAdjust="spacingAndGlyphs" >G4</text>
<rect x="551.4" y="696.8" width="17" height="13" fill="#fff" stroke="#3c3c3c" stroke-width="1.6"/>
<text x="559.9" y="706.5999999999999" font-size="8.5" fill="#666" text-anchor="middle">DP</text>
<path d="M873.6 610.4 H902.6 Q908.6 610.4 908.6 616.4 V705 Q908.6 711 902.6 711 H873.6" fill="none" stroke="#c4c4c4" stroke-width="1.2"/>
<rect x="869.5" y="607.4" width="3.5" height="103.60000000000002" fill="#e4e4e4" stroke="#cfcfcf" stroke-width="0.8"/>
<path d="M862 661.5 V703 H917.4 V661.5" fill="none" stroke="#c8c8c8" stroke-width="1.2"/>
<text x="888.6" y="669.5" font-size="17.5" fill="#2e2e2e" text-anchor="middle" font-weight="normal" textLength="20" lengthAdjust="spacingAndGlyphs" >F7</text>
<rect x="881" y="696.5" width="17" height="13" fill="#fff" stroke="#3c3c3c" stroke-width="1.6"/>
<text x="889.5" y="706.3" font-size="8.5" fill="#666" text-anchor="middle">DP</text>
<circle cx="539.6" cy="553" r="3.6" fill="#e6e030" stroke="#d0c820" stroke-width="0.8"/>
<circle cx="539.6" cy="553.8" r="1.3" fill="#6a6020"/>
<circle cx="626.5" cy="553.4" r="3.6" fill="#e6e030" stroke="#d0c820" stroke-width="0.8"/>
<circle cx="626.5" cy="554.1999999999999" r="1.3" fill="#6a6020"/>
<circle cx="643.6" cy="550" r="3.6" fill="#e6e030" stroke="#d0c820" stroke-width="0.8"/>
<circle cx="643.6" cy="550.8" r="1.3" fill="#6a6020"/>
<circle cx="698" cy="550" r="3.6" fill="#e6e030" stroke="#d0c820" stroke-width="0.8"/>
<circle cx="698" cy="550.8" r="1.3" fill="#6a6020"/>
<circle cx="533" cy="661" r="3.6" fill="#e6e030" stroke="#d0c820" stroke-width="0.8"/>
<circle cx="533" cy="661.8" r="1.3" fill="#6a6020"/>
<circle cx="587" cy="661" r="3.6" fill="#e6e030" stroke="#d0c820" stroke-width="0.8"/>
<circle cx="587" cy="661.8" r="1.3" fill="#6a6020"/>
<circle cx="748" cy="664.4" r="3.6" fill="#e6e030" stroke="#d0c820" stroke-width="0.8"/>
<circle cx="748" cy="665.1999999999999" r="1.3" fill="#6a6020"/>
<circle cx="835.7" cy="664.4" r="3.6" fill="#e6e030" stroke="#d0c820" stroke-width="0.8"/>
<circle cx="835.7" cy="665.1999999999999" r="1.3" fill="#6a6020"/>
<circle cx="862" cy="661.5" r="3.6" fill="#e6e030" stroke="#d0c820" stroke-width="0.8"/>
<circle cx="862" cy="662.3" r="1.3" fill="#6a6020"/>
<circle cx="917.4" cy="661.5" r="3.6" fill="#e6e030" stroke="#d0c820" stroke-width="0.8"/>
<circle cx="917.4" cy="662.3" r="1.3" fill="#6a6020"/>
<path d="M656 532 L678 527 L674 532 L678 537 Z" fill="none" stroke="#c4f0c4" stroke-width="1.3" stroke-linejoin="round"/>
<path d="M575 645 L553 640 L557 645 L553 650 Z" fill="none" stroke="#c4f0c4" stroke-width="1.3" stroke-linejoin="round"/>
<path d="M900 642 L878 637 L882 642 L878 647 Z" fill="none" stroke="#c4f0c4" stroke-width="1.3" stroke-linejoin="round"/>
<path d="M735 672 L713 667 L717 672 L713 677 Z" fill="none" stroke="#c4f0c4" stroke-width="1.3" stroke-linejoin="round"/>
<path d="M709 510 Q722 512 720 522 L720 588 Q722 598 709 600" fill="none" stroke="#e8b890" stroke-width="1.2"/>
<path d="M715 535 Q720 550 715 570" fill="none" stroke="#e8b890" stroke-width="1.2"/>
<path d="M927 622 Q940 626 938 636 L938 694 Q940 704 927 709" fill="none" stroke="#e8b890" stroke-width="1.2"/>
<path d="M932 650 L936 660 L932 672" fill="none" stroke="#e8b890" stroke-width="1.2"/>
<circle cx="606" cy="617.5" r="4" fill="none" stroke="#5050d0" stroke-width="1.5"/>
<circle cx="617" cy="661" r="8" fill="none" stroke="#c8c8c8" stroke-width="1.3"/>
<line x1="611" y1="661" x2="623" y2="661" stroke="#c8c8c8" stroke-width="1.3" />
<rect x="634" y="611" width="25" height="101" fill="none" stroke="#999" stroke-width="1.2"/>
<rect x="637" y="612" width="19" height="99" fill="#f6f6ff" stroke="#3030e0" stroke-width="1.4"/>
<path d="M638 615.0 q4 -3 8 0 q4 3 8 0 M638 620.2 q4 -3 8 0 q4 3 8 0 M638 625.4 q4 -3 8 0 q4 3 8 0 M638 630.6 q4 -3 8 0 q4 3 8 0 M638 635.8 q4 -3 8 0 q4 3 8 0 M638 641.0 q4 -3 8 0 q4 3 8 0 M638 646.2 q4 -3 8 0 q4 3 8 0 M638 651.4 q4 -3 8 0 q4 3 8 0 M638 656.6 q4 -3 8 0 q4 3 8 0 M638 661.8 q4 -3 8 0 q4 3 8 0 M638 667.0 q4 -3 8 0 q4 3 8 0 M638 672.2 q4 -3 8 0 q4 3 8 0 M638 677.4 q4 -3 8 0 q4 3 8 0 M638 682.6 q4 -3 8 0 q4 3 8 0 M638 687.8 q4 -3 8 0 q4 3 8 0 M638 693.0 q4 -3 8 0 q4 3 8 0 M638 698.2 q4 -3 8 0 q4 3 8 0 M638 703.4 q4 -3 8 0 q4 3 8 0 M638 708.6 q4 -3 8 0 q4 3 8 0" fill="none" stroke="#3535e8" stroke-width="1.3"/>
<line x1="604" y1="680" x2="637" y2="680" stroke="#86e886" stroke-width="1.8" />
<path d="M637 680 L617 674.5 L621 680 L617 685.5 Z" fill="none" stroke="#86e886" stroke-width="1.8" stroke-linejoin="round"/>
<circle cx="625.7" cy="707" r="4.5" fill="none" stroke="#d060d0" stroke-width="1.5"/>
<circle cx="645.5" cy="706" r="4.2" fill="#3a5a40"/>
<path d="M689.7 610 L689.7 712 M689.7 617.6 L715 617.6 L715 705 L689.7 705" fill="none" stroke="#e03030" stroke-width="1.4"/>
<ellipse cx="702.3" cy="624.5" rx="5" ry="4.5" fill="#0a1adf"/>
<ellipse cx="702.3" cy="697.5" rx="5" ry="4.5" fill="#e02a1a"/>
<circle cx="702.3" cy="661" r="7.5" fill="none" stroke="#c8c8c8" stroke-width="1.2"/>
<path d="M695 661 L710 661 M702.3 654 L702.3 668" stroke="#c8c8c8" stroke-width="1"/>
<path d="M727 617 L735 625 L727 633 L719 625 Z" fill="#fff" stroke="#999" stroke-width="1.2"/>
<path d="M913 910.5 L919 926.7 L904.2 926.7 Z" fill="#4a78e8"/>
<rect x="1252.3" y="922.6" width="9.3" height="4.4" fill="#4a7ae8"/>
<rect x="1269" y="922.6" width="9.5" height="4.4" fill="#4a7ae8"/>
<path d="M993 924.5 Q1005 922 1018 926.5 L993 927 Z" fill="#777"/>
<path d="M1094 927 Q1098 921 1110 921.5 L1110 927 Z" fill="#6a6a6a"/>
<rect x="1113" y="925" width="9" height="2.2" fill="#4a7ae8"/>
<path d="M618.7 952 C622 968 640 980 639.4 995 L624.4 995 L616.4 975.4 L608 995 L590 995 C598 978 614 968 618.7 952 Z" fill="#6aa2d4"/>
<path d="M586 998.4 L598 998.4 C596 1010 604 1022 614 1024 L614 1032 C597 1030 586 1018 586 998.4 Z M643 998.4 L631 998.4 C633 1010 625 1022 618 1024 L618 1032 C633 1030 643 1018 643 998.4 Z" fill="#3b4553"/>
<rect x="584" y="997" width="14" height="5" rx="2" fill="#3b4553"/><rect x="630" y="997" width="15" height="5" rx="2" fill="#3b4553"/>
<line x1="575" y1="974.5" x2="603" y2="974.5" stroke="#9cc0e0" stroke-width="1.3"/>
<line x1="584" y1="979" x2="600" y2="979" stroke="#9cc0e0" stroke-width="1.3"/>
<line x1="573" y1="984" x2="597" y2="984" stroke="#9cc0e0" stroke-width="1.3"/>
<line x1="562" y1="988.7" x2="594" y2="988.7" stroke="#9cc0e0" stroke-width="1.3"/>
<line x1="556" y1="1002" x2="586" y2="1002" stroke="#3b4553" stroke-width="1.6"/>
<line x1="572" y1="1008" x2="586" y2="1008" stroke="#3b4553" stroke-width="1.6"/>
<line x1="565" y1="1014" x2="588" y2="1014" stroke="#3b4553" stroke-width="1.6"/>
<line x1="581" y1="1020.6" x2="590" y2="1020.6" stroke="#3b4553" stroke-width="1.6"/>
<text x="651" y="1013.5" font-size="43" font-weight="bold" fill="#3b4553" textLength="92" lengthAdjust="spacingAndGlyphs">Prof</text>
<text x="742" y="1013.5" font-size="43" font-weight="bold" fill="#6aa2d4" textLength="134" lengthAdjust="spacingAndGlyphs">Install</text>
<text x="654.5" y="1031" font-size="12" font-weight="bold" fill="#3b4553" textLength="220" lengthAdjust="spacingAndGlyphs">Проектування <tspan fill="#6aa2d4">•</tspan> Монтаж <tspan fill="#6aa2d4">•</tspan> Сервіс</text>
<polygon points="961.5,941.7 964.0,940.7 966.5,939.7 969.0,938.6 971.5,937.6 974.0,936.6 976.5,935.7 979.1,934.8 981.6,933.9 984.2,933.2 986.8,932.5 989.4,931.8 992.1,931.2 994.7,930.6 997.4,930.2 1000.0,929.8 1002.7,929.6 1005.4,929.5 1008.1,929.5 1010.8,929.6 1013.5,929.7 1016.2,930.0 1018.9,930.3 1021.5,930.7 1024.2,931.2 1026.8,931.7 1029.5,932.4 1032.1,933.1 1034.6,933.9 1037.2,934.7 1039.8,935.6 1042.3,936.5 1044.8,937.6 1047.2,938.7 1049.7,939.9 1052.0,941.2 1054.3,942.6 1056.5,944.1 1058.6,945.8 1060.6,947.6 1062.6,949.5 1064.4,951.4 1066.3,953.4 1068.1,955.4 1069.8,957.5 1071.6,959.5 1073.5,961.4 1075.3,963.4 1077.1,965.4 1078.8,967.5 1080.6,969.6 1082.3,971.6 1084.1,973.6 1086.1,975.5 1088.2,977.1 1090.5,978.5 1093.0,979.6 1095.5,980.5 1098.2,981.1 1100.9,981.4 1103.5,981.5 1106.2,981.3 1108.9,981.0 1111.6,980.4 1114.1,979.7 1116.7,978.8 1119.2,977.8 1121.7,976.7 1124.0,975.4 1126.4,974.1 1128.7,972.7 1130.9,971.2 1133.1,969.6 1135.3,968.0 1137.5,966.4 1139.6,964.7 1141.7,963.0 1143.7,961.2 1145.6,959.4 1147.6,957.5 1149.5,955.6 1151.4,953.7 1153.2,951.7 1155.1,949.8 1156.9,947.8 1158.8,945.8 1160.6,943.8 1162.4,941.8 1164.2,939.8 1166.0,937.8 1168.6,950.4 1166.7,952.3 1164.8,954.1 1163.0,956.0 1161.1,957.8 1159.2,959.7 1157.3,961.5 1155.3,963.3 1153.4,965.1 1151.4,966.9 1149.4,968.6 1147.4,970.3 1145.4,972.0 1143.3,973.6 1141.1,975.2 1139.0,976.7 1136.7,978.1 1134.5,979.5 1132.2,980.8 1129.9,982.1 1127.6,983.3 1125.2,984.4 1122.7,985.4 1120.3,986.3 1117.7,987.0 1115.2,987.7 1112.6,988.2 1110.0,988.5 1107.3,988.6 1104.7,988.5 1102.1,988.2 1099.5,987.6 1097.0,986.9 1094.5,985.9 1092.2,984.6 1090.0,983.2 1088.0,981.5 1086.1,979.6 1084.3,977.6 1082.6,975.6 1080.9,973.6 1079.2,971.5 1077.5,969.5 1075.7,967.6 1073.9,965.6 1072.2,963.6 1070.5,961.6 1068.7,959.6 1066.9,957.6 1065.0,955.7 1063.1,953.9 1061.0,952.2 1058.9,950.7 1056.7,949.3 1054.3,948.0 1051.9,946.8 1049.5,945.8 1047.1,944.8 1044.6,943.9 1042.1,943.0 1039.5,942.3 1037.0,941.6 1034.4,941.0 1031.8,940.5 1029.2,940.0 1026.6,939.6 1023.9,939.3 1021.3,939.1 1018.7,938.9 1016.0,938.9 1013.4,938.9 1010.7,939.0 1008.1,939.1 1005.5,939.4 1002.8,939.8 1000.2,940.2 997.6,940.8 995.1,941.4 992.5,942.1 990.0,942.9 987.5,943.7 985.0,944.6 982.5,945.5 980.1,946.6 977.6,947.7 975.3,948.8 972.9,949.9 970.5,951.1 968.1,952.2 965.7,953.4" fill="#3c3c3c"/>
<polygon points="965.7,953.4 968.1,952.2 970.5,951.1 972.9,949.9 975.3,948.8 977.6,947.7 980.1,946.6 982.5,945.5 985.0,944.6 987.5,943.7 990.0,942.9 992.5,942.1 995.1,941.4 997.6,940.8 1000.2,940.2 1002.8,939.8 1005.5,939.4 1008.1,939.1 1010.7,939.0 1013.4,938.9 1016.0,938.9 1018.7,938.9 1021.3,939.1 1023.9,939.3 1026.6,939.6 1029.2,940.0 1031.8,940.5 1034.4,941.0 1037.0,941.6 1039.5,942.3 1042.1,943.0 1044.6,943.9 1047.1,944.8 1049.5,945.8 1051.9,946.8 1054.3,948.0 1056.7,949.3 1058.9,950.7 1061.0,952.2 1063.1,953.9 1065.0,955.7 1066.9,957.6 1068.7,959.6 1070.5,961.6 1072.2,963.6 1073.9,965.6 1075.7,967.6 1077.5,969.5 1079.2,971.5 1080.9,973.6 1082.6,975.6 1084.3,977.6 1086.1,979.6 1088.0,981.5 1090.0,983.2 1092.2,984.6 1094.5,985.9 1097.0,986.9 1099.5,987.6 1102.1,988.2 1104.7,988.5 1107.3,988.6 1110.0,988.5 1112.6,988.2 1115.2,987.7 1117.7,987.0 1120.3,986.3 1122.7,985.4 1125.2,984.4 1127.6,983.3 1129.9,982.1 1132.2,980.8 1134.5,979.5 1136.7,978.1 1139.0,976.7 1141.1,975.2 1143.3,973.6 1145.4,972.0 1147.4,970.3 1149.4,968.6 1151.4,966.9 1153.4,965.1 1155.3,963.3 1157.3,961.5 1159.2,959.7 1161.1,957.8 1163.0,956.0 1164.8,954.1 1166.7,952.3 1168.6,950.4 1171.1,962.3 1169.1,964.0 1167.2,965.7 1165.2,967.5 1163.3,969.2 1161.3,970.9 1159.3,972.6 1157.3,974.3 1155.3,975.9 1153.3,977.5 1151.2,979.1 1149.1,980.7 1147.0,982.2 1144.8,983.6 1142.6,985.0 1140.4,986.3 1138.1,987.6 1135.8,988.8 1133.5,989.9 1131.1,991.0 1128.7,991.9 1126.2,992.8 1123.8,993.5 1121.3,994.2 1118.7,994.7 1116.2,995.2 1113.6,995.4 1111.0,995.5 1108.4,995.4 1105.8,995.1 1103.3,994.6 1100.8,993.8 1098.4,992.9 1096.0,991.8 1093.8,990.4 1091.7,988.9 1089.7,987.1 1087.9,985.3 1086.2,983.3 1084.6,981.3 1082.9,979.2 1081.2,977.3 1079.5,975.3 1077.8,973.3 1076.1,971.3 1074.4,969.3 1072.7,967.3 1071.0,965.3 1069.2,963.4 1067.3,961.6 1065.4,959.9 1063.3,958.3 1061.1,956.9 1058.8,955.6 1056.5,954.5 1054.1,953.4 1051.7,952.5 1049.2,951.6 1046.7,950.8 1044.2,950.1 1041.7,949.5 1039.1,948.9 1036.6,948.5 1034.0,948.1 1031.4,947.8 1028.8,947.6 1026.2,947.5 1023.6,947.4 1021.0,947.4 1018.4,947.5 1015.8,947.6 1013.2,947.9 1010.6,948.2 1008.0,948.6 1005.5,949.1 1002.9,949.7 1000.4,950.3 997.9,951.0 995.4,951.8 992.9,952.7 990.5,953.6 988.1,954.6 985.7,955.7 983.4,956.8 981.1,958.0 978.8,959.3 976.5,960.5 974.2,961.8 972.0,963.1 969.7,964.3" fill="#b8352f"/>
<polygon points="969.7,964.3 972.0,963.1 974.2,961.8 976.5,960.5 978.8,959.3 981.1,958.0 983.4,956.8 985.7,955.7 988.1,954.6 990.5,953.6 992.9,952.7 995.4,951.8 997.9,951.0 1000.4,950.3 1002.9,949.7 1005.5,949.1 1008.0,948.6 1010.6,948.2 1013.2,947.9 1015.8,947.6 1018.4,947.5 1021.0,947.4 1023.6,947.4 1026.2,947.5 1028.8,947.6 1031.4,947.8 1034.0,948.1 1036.6,948.5 1039.1,948.9 1041.7,949.5 1044.2,950.1 1046.7,950.8 1049.2,951.6 1051.7,952.5 1054.1,953.4 1056.5,954.5 1058.8,955.6 1061.1,956.9 1063.3,958.3 1065.4,959.9 1067.3,961.6 1069.2,963.4 1071.0,965.3 1072.7,967.3 1074.4,969.3 1076.1,971.3 1077.8,973.3 1079.5,975.3 1081.2,977.3 1082.9,979.2 1084.6,981.3 1086.2,983.3 1087.9,985.3 1089.7,987.1 1091.7,988.9 1093.8,990.4 1096.0,991.8 1098.4,992.9 1100.8,993.8 1103.3,994.6 1105.8,995.1 1108.4,995.4 1111.0,995.5 1113.6,995.4 1116.2,995.2 1118.7,994.7 1121.3,994.2 1123.8,993.5 1126.2,992.8 1128.7,991.9 1131.1,991.0 1133.5,989.9 1135.8,988.8 1138.1,987.6 1140.4,986.3 1142.6,985.0 1144.8,983.6 1147.0,982.2 1149.1,980.7 1151.2,979.1 1153.3,977.5 1155.3,975.9 1157.3,974.3 1159.3,972.6 1161.3,970.9 1163.3,969.2 1165.2,967.5 1167.2,965.7 1169.1,964.0 1171.1,962.3 1173.7,974.9 1171.7,976.5 1169.6,978.0 1167.6,979.6 1165.6,981.2 1163.5,982.8 1161.5,984.3 1159.4,985.9 1157.3,987.4 1155.2,988.9 1153.1,990.3 1150.9,991.7 1148.7,993.0 1146.5,994.2 1144.2,995.4 1141.9,996.6 1139.6,997.7 1137.2,998.7 1134.8,999.6 1132.3,1000.4 1129.9,1001.1 1127.4,1001.7 1124.8,1002.2 1122.3,1002.6 1119.7,1002.9 1117.2,1003.1 1114.6,1003.1 1112.0,1003.0 1109.5,1002.7 1107.0,1002.1 1104.5,1001.4 1102.1,1000.4 1099.8,999.3 1097.6,998.0 1095.5,996.6 1093.5,994.9 1091.6,993.1 1089.9,991.2 1088.2,989.3 1086.6,987.3 1085.0,985.3 1083.3,983.3 1081.6,981.4 1080.0,979.4 1078.3,977.4 1076.7,975.4 1075.1,973.4 1073.4,971.5 1071.7,969.6 1069.8,967.8 1067.8,966.2 1065.7,964.7 1063.5,963.4 1061.2,962.3 1058.8,961.3 1056.4,960.4 1054.0,959.6 1051.5,958.8 1049.0,958.1 1046.5,957.5 1044.0,957.1 1041.5,956.7 1038.9,956.4 1036.3,956.2 1033.8,956.1 1031.2,956.1 1028.6,956.1 1026.0,956.2 1023.5,956.4 1020.9,956.6 1018.4,956.9 1015.8,957.4 1013.3,957.9 1010.8,958.4 1008.3,959.0 1005.8,959.7 1003.3,960.4 1000.9,961.2 998.5,962.1 996.1,963.1 993.7,964.1 991.4,965.2 989.2,966.5 986.9,967.8 984.7,969.1 982.6,970.4 980.4,971.8 978.2,973.2 976.1,974.6 973.9,976.0" fill="#f0cd5a"/>
<text x="972" y="1010.5" font-family="Liberation Serif, serif" font-size="27" fill="#454545" textLength="90" lengthAdjust="spacingAndGlyphs">german</text>
<text x="973" y="1029.6" font-size="20" font-weight="bold" fill="#454545" textLength="104" lengthAdjust="spacingAndGlyphs">cooperation</text>
<text x="973" y="1045.8" font-size="10" fill="#b03a48" textLength="151" lengthAdjust="spacingAndGlyphs">DEUTSCHE ZUSAMMENARBEIT</text>
<text x="1209" y="981" font-size="8" font-weight="bold" fill="#333" textLength="52" lengthAdjust="spacingAndGlyphs">Implemented by</text>
<text x="1208" y="1023" font-size="36" font-weight="bold" fill="#c0342c" textLength="45" lengthAdjust="spacingAndGlyphs">giz</text>
<text x="1259.5" y="1008.0" font-size="7" font-weight="bold" fill="#c0342c" textLength="66" lengthAdjust="spacingAndGlyphs">Deutsche Gesellschaft</text>
<text x="1259.5" y="1015.6" font-size="7" font-weight="bold" fill="#c0342c" textLength="54" lengthAdjust="spacingAndGlyphs">für Internationale</text>
<text x="1259.5" y="1023.2" font-size="7" font-weight="bold" fill="#c0342c" textLength="85" lengthAdjust="spacingAndGlyphs">Zusammenarbeit (GIZ) GmbH</text>
<text x="1382" y="980" font-size="9" font-weight="bold" fill="#333" textLength="69" lengthAdjust="spacingAndGlyphs">In cooperation with</text>
<circle cx="1411" cy="1015" r="26" fill="#fbf8f0"/>
<defs><linearGradient id="tooth" x1="0" y1="0" x2="1" y2="1"><stop offset="0" stop-color="#b07050"/><stop offset="0.5" stop-color="#e8a048"/><stop offset="1" stop-color="#f0c070"/></linearGradient></defs>
<path d="M1420 990 C1414 990 1414 1000 1418 1008 C1422 1020 1425 1030 1432 1034 C1436 1025 1438 1010 1437 998 C1436 990 1428 988 1426 992 C1424 989 1422 989 1420 990 Z" fill="url(#tooth)"/>
<path d="M1418 1004 C1416 1018 1422 1030 1430 1034 C1428 1025 1426 1012 1418 1004 Z" fill="#3a2860"/>
<text x="1383" y="1008.0" font-size="6" fill="#e8d8a8" textLength="25" lengthAdjust="spacingAndGlyphs">OFFICE OF</text>
<text x="1383" y="1015.4" font-size="6" fill="#c8c0b0" textLength="32" lengthAdjust="spacingAndGlyphs">SUSTAINABLE</text>
<text x="1383" y="1022.8" font-size="6" fill="#7a7a80" textLength="27" lengthAdjust="spacingAndGlyphs">SOLUTIONS</text>
</svg>
<!-- pencil -->
<div class="abs" style="left:37px;top:1082px;width:62px;height:62px;border-radius:50%;background:#2a2a2d"></div>
<svg class="abs" style="left:50px;top:1096px" width="34" height="36"><path d="M4.6 21.2 V28 H11.6 L31.2 8.6 L24.4 1.8 Z M19.3 7.3 L26.3 14.3" fill="none" stroke="#6cf097" stroke-width="2.3" stroke-linejoin="round"/><line x1="4" y1="32.2" x2="31.5" y2="32.2" stroke="#6cf097" stroke-width="2.3"/></svg>
<div class="abs" style="left:1468px;top:634px;width:5px;height:30px;border-radius:3px;background:#c8c8c8"></div>
<!-- main video -->
<svg class="abs" style="left:1478px;top:145px" width="440" height="246">
<defs><clipPath id="vc"><rect width="440" height="246" rx="10"/></clipPath>
<filter id="vb"><feGaussianBlur stdDeviation="7"/></filter><filter id="vb2"><feGaussianBlur stdDeviation="2"/></filter>
<linearGradient id="vg" x1="0" y1="0" x2="1" y2="0"><stop offset="0" stop-color="#cfccb4"/><stop offset="0.5" stop-color="#dcdac8"/><stop offset="1" stop-color="#d4d6c4"/></linearGradient></defs>
<g clip-path="url(#vc)">
<rect width="440" height="246" fill="url(#vg)"/>
<g filter="url(#vb)">
<rect x="160" y="8" width="80" height="62" rx="6" fill="#b5ae9c" opacity="0.75"/>
<rect x="218" y="20" width="24" height="40" rx="4" fill="#ece8dc" opacity="0.8"/>
<rect x="312" y="3" width="82" height="50" rx="6" fill="#b8b0a0" opacity="0.75"/>
<path d="M118 246 L122 130 Q130 95 200 95 L280 95 Q345 95 350 130 L352 246 Z" fill="#2c3430"/>
<ellipse cx="95" cy="205" rx="58" ry="48" fill="#383830"/>
</g>
<g filter="url(#vb2)">
<path d="M92 246 Q110 180 146 164 L196 148 Q240 160 270 175 L315 152 Q350 158 374 170 Q405 200 414 246 Z" fill="#f3f3f1"/>
<path d="M222 246 L228 180 L245 175 L250 246 Z" fill="#e6e6e2"/>
<ellipse cx="242" cy="88" rx="45" ry="52" fill="#c79f86"/>
<path d="M196 78 Q192 34 242 34 Q292 34 288 80 Q276 56 242 56 Q208 56 196 78 Z" fill="#3b3029"/>
<rect x="200" y="75" width="41" height="21" rx="7" fill="#8a86b8" fill-opacity="0.35" stroke="#6a6470" stroke-width="2.5"/><rect x="248" y="73" width="34" height="21" rx="7" fill="#8a86b8" fill-opacity="0.35" stroke="#6a6470" stroke-width="2.5"/>
<path d="M222 132 Q250 118 285 124 Q300 135 302 185 L318 205 Q300 222 280 205 L238 180 Q222 160 222 132 Z" fill="#d2a890"/>
<path d="M295 200 L323 175 L352 195 L313 226 Z" fill="#8a876f"/>
<path d="M313 226 L352 195 L395 246 L340 246 Z" fill="#ecebe6"/>
</g></g>
</g>
</svg>
<div class="lbl" style="left:1482px;top:363px;width:145px;height:26px;border-radius:6px;background:rgba(35,35,35,0.85)"><span style="position:absolute;left:5px;top:3.5px;font-size:16.5px">Arsentii Liashenko</span></div>
<div class="abs" style="left:1683px;top:414px;width:31px;height:5px;border-radius:3px;background:#e8e8e8"></div>
<!-- grid -->
<div class="abs" style="left:1488.5px;top:445px;width:418.5px;height:705px;background:#242425;border-radius:10px;overflow:hidden"></div>
<svg class="abs" style="left:1489px;top:445px" width="209" height="118">
<defs><linearGradient id="av1" x1="0" y1="0" x2="0.3" y2="1"><stop offset="0" stop-color="#d6d2cc"/><stop offset="1" stop-color="#b4aca4"/></linearGradient>
<filter id="bl2"><feGaussianBlur stdDeviation="2.4"/></filter><clipPath id="avc"><path d="M57 92 V22 a10 10 0 0 1 10 -10 h74 a10 10 0 0 1 10 10 V92 Z"/></clipPath></defs>
<path d="M57 92 V22 a10 10 0 0 1 10 -10 h74 a10 10 0 0 1 10 10 V92 Z" fill="url(#av1)"/>
<g filter="url(#bl2)" clip-path="url(#avc)">
<path d="M118 92 L142 72 L152 78 L152 92 Z" fill="#5e5634"/>
<ellipse cx="116" cy="55" rx="25" ry="35" fill="#9a7c68"/>
<ellipse cx="117" cy="36" rx="23" ry="16" fill="#a89888"/>
<ellipse cx="106" cy="62" rx="11" ry="15" fill="#b49278"/>
<path d="M98 80 Q112 92 128 82 L126 92 L102 92 Z" fill="#56443a"/>
<rect x="96" y="52" width="30" height="4" rx="2" fill="#6a5446" opacity="0.6"/>
</g>
</svg><svg class="abs" style="left:1501px;top:457px" width="28" height="28" viewBox="0 0 24 24"><defs><linearGradient id="hg1" x1="0" y1="0" x2="0" y2="1"><stop offset="0" stop-color="#fbd84a"/><stop offset="1" stop-color="#f0b020"/></linearGradient></defs><g fill="url(#hg1)" stroke="#d08c18" stroke-width="0.5"><rect x="6.6" y="2.6" width="3.4" height="12" rx="1.7"/><rect x="10.3" y="0.8" width="3.4" height="13" rx="1.7"/><rect x="14" y="1.8" width="3.4" height="12.5" rx="1.7"/><rect x="17.5" y="4.2" width="3.2" height="11" rx="1.6"/><path d="M6.6 10.5 H20.7 V16.5 C20.7 20.8 17.6 23.4 13.6 23.4 C10.3 23.4 8.4 21.8 6.8 19.4 L2.6 13.6 C1.8 12.3 3.3 10.9 4.6 11.8 L6.8 13.8 Z"/></g><path d="M7.2 11 H20.2 V15 H7.2 Z" fill="url(#hg1)"/></svg><svg class="abs" style="left:1698px;top:445px" width="209" height="118">
<defs><filter id="bl3"><feGaussianBlur stdDeviation="1.8"/></filter><linearGradient id="ubl" x1="0" y1="0" x2="1" y2="1"><stop offset="0" stop-color="#2a5cb8"/><stop offset="0.5" stop-color="#1e4c9e"/><stop offset="1" stop-color="#2858b0"/></linearGradient></defs>
<rect width="209" height="118" fill="url(#ubl)"/>
<g filter="url(#bl3)"><path d="M0 66 Q60 62 120 66 T209 64 V118 H0 Z" fill="#e0c236"/>
<circle cx="28" cy="25" r="13" fill="#7f9cd0" opacity="0.45"/><circle cx="71" cy="47" r="12" fill="#7f9cd0" opacity="0.45"/><circle cx="180" cy="25" r="13" fill="#7f9cd0" opacity="0.45"/><circle cx="155" cy="52" r="12" fill="#7f9cd0" opacity="0.45"/><circle cx="28" cy="76" r="12" fill="#d8d0b0" opacity="0.5"/>
<path d="M34 16 q6 -4 8 4 v14 q-4 4 -8 -2 Z M77 38 q6 -4 8 4 v14 q-4 4 -8 -2 Z M186 16 q6 -4 8 4 v14 q-4 4 -8 -2 Z M161 43 q6 -4 8 4 v14 q-4 4 -8 -2 Z M34 68 q6 -4 8 4 v14 q-4 4 -8 -2 Z" fill="#e8eef8" opacity="0.8"/>
<path d="M70 89 Q76 66 100 64 L130 64 Q156 68 162 89 Z" fill="#eccf30"/>
<rect x="106" y="56" width="20" height="12" fill="#c8a890"/>
<ellipse cx="116" cy="40" rx="16" ry="22" fill="#d4b4a0"/>
<path d="M92 40 Q88 4 116 3 Q144 4 139 38 Q132 20 116 22 Q100 22 96 44 Z" fill="#cfcdc4"/>
</g>
</svg><svg class="abs" style="left:1489px;top:562.5px" width="209" height="118">
<rect width="209" height="118" fill="#828282"/>
<path d="M76.3 45 H93.5 L98.5 39.2 H116 L121.8 45 H133.2 V79.5 H76.3 Z" fill="none" stroke="#fff" stroke-width="5.2" stroke-linejoin="miter"/>
<circle cx="104.4" cy="59.6" r="11" fill="none" stroke="#fff" stroke-width="4.6"/>
<line x1="75.5" y1="30.3" x2="132.7" y2="87" stroke="#828282" stroke-width="9"/>
<line x1="75.5" y1="30.3" x2="132.7" y2="87" stroke="#fff" stroke-width="5.4" stroke-linecap="round"/>
</svg><svg class="abs" style="left:1698px;top:562.5px" width="209" height="118">
<defs><filter id="bl4"><feGaussianBlur stdDeviation="2.5"/></filter><filter id="bl4b"><feGaussianBlur stdDeviation="8"/></filter></defs>
<rect width="209" height="118" fill="#0e0e0e"/>
<g filter="url(#bl4b)"><rect x="165" y="20" width="50" height="100" fill="#3a3028"/><rect x="130" y="0" width="79" height="30" fill="#1e1c1a"/></g>
<g filter="url(#bl4)">
<path d="M37 118 Q50 80 95 68 L140 66 Q168 80 174 118 Z" fill="#d6e0e0"/>
<ellipse cx="120" cy="58" rx="21" ry="29" fill="#b09080"/><ellipse cx="120" cy="44" rx="19" ry="14" fill="#cdb4a8"/>
<path d="M104 72 Q120 92 137 72 L134 84 Q120 96 106 84 Z" fill="#504038"/></g>
</svg><svg class="abs" style="left:1489px;top:680.5px" width="209" height="118">
<defs><filter id="bl5"><feGaussianBlur stdDeviation="2"/></filter></defs>
<rect width="209" height="118" fill="#dedad4"/>
<g filter="url(#bl5)"><rect x="0" y="0" width="98" height="118" fill="#8a6a48"/>
<rect x="2" y="2" width="26" height="26" fill="#50685a"/><rect x="32" y="2" width="16" height="26" fill="#4a6858"/><rect x="52" y="4" width="24" height="16" fill="#e8e8e8"/><rect x="76" y="10" width="20" height="14" fill="#485870"/>
<rect x="52" y="20" width="30" height="10" fill="#2a3048"/>
<rect x="2" y="34" width="24" height="24" fill="#6a5a48"/><rect x="30" y="34" width="14" height="24" fill="#4a6050"/>
<rect x="46" y="36" width="20" height="16" fill="#903030"/><rect x="68" y="50" width="22" height="10" fill="#e8e8f0"/>
<rect x="2" y="64" width="46" height="28" fill="#507060"/><rect x="50" y="64" width="40" height="20" fill="#9a7c5a"/>
<rect x="196" y="0" width="13" height="118" fill="#7a6a50"/>
<path d="M128 118 L132 66 Q150 60 166 72 L168 118 Z" fill="#2e3038"/>
<path d="M59 118 Q64 72 113 62 Q158 70 163 118 Z" fill="#a8b4d8"/>
<ellipse cx="113" cy="46" rx="16" ry="21" fill="#d4a090"/><ellipse cx="113" cy="30" rx="14" ry="7" fill="#b89080"/>
<rect x="99" y="40" width="28" height="6" rx="2" fill="#707070" opacity="0.6"/></g>
</svg><svg class="abs" style="left:1698px;top:680.5px" width="209" height="118">
<defs><filter id="bl6"><feGaussianBlur stdDeviation="2.5"/></filter><filter id="bl6b"><feGaussianBlur stdDeviation="8"/></filter></defs>
<rect width="209" height="118" fill="#d8d8d6"/>
<g filter="url(#bl6b)"><rect x="0" y="0" width="209" height="40" fill="#e6e6e4"/><rect x="30" y="60" width="60" height="30" fill="#c8c8c6"/></g>
<g filter="url(#bl6)">
<path d="M74 118 Q85 92 122 86 Q170 92 194 118 Z" fill="#2a3042"/>
<ellipse cx="123" cy="62" rx="23" ry="29" fill="#b89484"/><ellipse cx="122" cy="44" rx="20" ry="13" fill="#cdb2a6"/>
<path d="M108 84 Q122 96 138 84 L136 90 Q122 98 110 90 Z" fill="#604a40"/></g>
</svg><svg class="abs" style="left:1755px;top:927px" width="95" height="78">
<defs><filter id="bl7"><feGaussianBlur stdDeviation="1.3"/></filter><clipPath id="yvc"><path d="M0 78 V12 a12 12 0 0 1 12 -12 h71 a12 12 0 0 1 12 12 V78 Z"/></clipPath></defs>
<path d="M0 78 V12 a12 12 0 0 1 12 -12 h71 a12 12 0 0 1 12 12 V78 Z" fill="#bcd2da"/>
<g filter="url(#bl7)" clip-path="url(#yvc)">
<rect x="0" y="62" width="95" height="16" fill="#d8d4bc"/>
<path d="M20 78 Q24 45 45 38 L62 36 Q82 44 90 78 Z" fill="#f0eee6"/>
<path d="M30 48 L48 40 L52 60 L40 72 Z" fill="#e8dcb0"/>
<ellipse cx="57" cy="22" rx="11" ry="15" fill="#c49080"/>
<path d="M45 22 Q44 6 58 6 Q68 6 68 14 Q60 10 52 14 Q48 18 48 28 Z" fill="#808080"/>
<ellipse cx="66" cy="46" rx="7" ry="9" fill="#c89080"/>
</g>
</svg><svg class="abs" style="left:1546px;top:1045px" width="95" height="77">
<path d="M0 77 V12 a12 12 0 0 1 12 -12 h71 a12 12 0 0 1 12 12 V77 Z" fill="#ffffff"/>
<rect x="0" y="65" width="95" height="12" fill="#f2d84a"/>
<text x="2" y="72" font-family="Liberation Sans, sans-serif" font-size="28" font-weight="bold" fill="#2f6fb8" textLength="95" lengthAdjust="spacingAndGlyphs">PAEW</text>
</svg>
<div class="lbl" style="left:1492px;top:535px;width:202px;height:26px"><svg style="position:absolute;left:1px;top:4px" width="20" height="18" viewBox="0 0 20 18"><path d="M7.2 4 a3 3 0 0 1 6 0 v4.5 a3 3 0 0 1 -6 0 Z" fill="#d83a30"/><path d="M5 8 a5.2 5.2 0 0 0 10.4 0 M10.2 13.2 v2.3 M7.5 16 h5.4" fill="none" stroke="#d83a30" stroke-width="1.5"/><line x1="2" y1="16.6" x2="17" y2="1" stroke="#1c1c1e" stroke-width="3"/><line x1="2" y1="16.6" x2="17" y2="1" stroke="#d83a30" stroke-width="1.6"/></svg><span style="position:absolute;left:27px;top:3px">Oleksandr Dudnikov (...</span></div><div class="lbl" style="left:1701px;top:535px;width:202px;height:26px"><svg style="position:absolute;left:1px;top:4px" width="20" height="18" viewBox="0 0 20 18"><path d="M7.2 4 a3 3 0 0 1 6 0 v4.5 a3 3 0 0 1 -6 0 Z" fill="#d83a30"/><path d="M5 8 a5.2 5.2 0 0 0 10.4 0 M10.2 13.2 v2.3 M7.5 16 h5.4" fill="none" stroke="#d83a30" stroke-width="1.5"/><line x1="2" y1="16.6" x2="17" y2="1" stroke="#1c1c1e" stroke-width="3"/><line x1="2" y1="16.6" x2="17" y2="1" stroke="#d83a30" stroke-width="1.6"/></svg><span style="position:absolute;left:27px;top:3px">Liudmyla Tsyganok, P...</span></div><div class="lbl" style="left:1492px;top:652px;width:161px;height:25px"><svg style="position:absolute;left:1px;top:4px" width="20" height="18" viewBox="0 0 20 18"><path d="M7.2 4 a3 3 0 0 1 6 0 v4.5 a3 3 0 0 1 -6 0 Z" fill="#d83a30"/><path d="M5 8 a5.2 5.2 0 0 0 10.4 0 M10.2 13.2 v2.3 M7.5 16 h5.4" fill="none" stroke="#d83a30" stroke-width="1.5"/><line x1="2" y1="16.6" x2="17" y2="1" stroke="#1c1c1e" stroke-width="3"/><line x1="2" y1="16.6" x2="17" y2="1" stroke="#d83a30" stroke-width="1.6"/></svg><span style="position:absolute;left:27px;top:3px">Людмила Лестус</span></div><div class="lbl" style="left:1701px;top:652px;width:124px;height:25px"><svg style="position:absolute;left:1px;top:4px" width="20" height="18" viewBox="0 0 20 18"><path d="M7.2 4 a3 3 0 0 1 6 0 v4.5 a3 3 0 0 1 -6 0 Z" fill="#d83a30"/><path d="M5 8 a5.2 5.2 0 0 0 10.4 0 M10.2 13.2 v2.3 M7.5 16 h5.4" fill="none" stroke="#d83a30" stroke-width="1.5"/><line x1="2" y1="16.6" x2="17" y2="1" stroke="#1c1c1e" stroke-width="3"/><line x1="2" y1="16.6" x2="17" y2="1" stroke="#d83a30" stroke-width="1.6"/></svg><span style="position:absolute;left:27px;top:3px">Pit Shamiloff</span></div><div class="lbl" style="left:1492px;top:769px;width:143px;height:26px"><svg style="position:absolute;left:1px;top:4px" width="20" height="18" viewBox="0 0 20 18"><path d="M7.2 4 a3 3 0 0 1 6 0 v4.5 a3 3 0 0 1 -6 0 Z" fill="#d83a30"/><path d="M5 8 a5.2 5.2 0 0 0 10.4 0 M10.2 13.2 v2.3 M7.5 16 h5.4" fill="none" stroke="#d83a30" stroke-width="1.5"/><line x1="2" y1="16.6" x2="17" y2="1" stroke="#1c1c1e" stroke-width="3"/><line x1="2" y1="16.6" x2="17" y2="1" stroke="#d83a30" stroke-width="1.6"/></svg><span style="position:absolute;left:27px;top:3px">Олег Мандрик</span></div><div class="lbl" style="left:1701px;top:769px;width:151px;height:26px"><svg style="position:absolute;left:1px;top:4px" width="20" height="18" viewBox="0 0 20 18"><path d="M7.2 4 a3 3 0 0 1 6 0 v4.5 a3 3 0 0 1 -6 0 Z" fill="#d83a30"/><path d="M5 8 a5.2 5.2 0 0 0 10.4 0 M10.2 13.2 v2.3 M7.5 16 h5.4" fill="none" stroke="#d83a30" stroke-width="1.5"/><line x1="2" y1="16.6" x2="17" y2="1" stroke="#1c1c1e" stroke-width="3"/><line x1="2" y1="16.6" x2="17" y2="1" stroke="#d83a30" stroke-width="1.6"/></svg><span style="position:absolute;left:27px;top:3px">Андрій Аршулік</span></div><div class="lbl" style="left:1491px;top:887px;width:178px;height:25px"><svg style="position:absolute;left:1px;top:4px" width="20" height="18" viewBox="0 0 20 18"><path d="M7.2 4 a3 3 0 0 1 6 0 v4.5 a3 3 0 0 1 -6 0 Z" fill="#d83a30"/><path d="M5 8 a5.2 5.2 0 0 0 10.4 0 M10.2 13.2 v2.3 M7.5 16 h5.4" fill="none" stroke="#d83a30" stroke-width="1.5"/><line x1="2" y1="16.6" x2="17" y2="1" stroke="#1c1c1e" stroke-width="3"/><line x1="2" y1="16.6" x2="17" y2="1" stroke="#d83a30" stroke-width="1.6"/></svg><span style="position:absolute;left:27px;top:3px">Ruslan Popitchenko</span></div><div class="lbl" style="left:1701px;top:887px;width:144px;height:25px"><svg style="position:absolute;left:1px;top:4px" width="20" height="18" viewBox="0 0 20 18"><path d="M7.2 4 a3 3 0 0 1 6 0 v4.5 a3 3 0 0 1 -6 0 Z" fill="#d83a30"/><path d="M5 8 a5.2 5.2 0 0 0 10.4 0 M10.2 13.2 v2.3 M7.5 16 h5.4" fill="none" stroke="#d83a30" stroke-width="1.5"/><line x1="2" y1="16.6" x2="17" y2="1" stroke="#1c1c1e" stroke-width="3"/><line x1="2" y1="16.6" x2="17" y2="1" stroke="#d83a30" stroke-width="1.6"/></svg><span style="position:absolute;left:27px;top:3px">Денис Жалдак</span></div><div class="lbl" style="left:1491px;top:1005px;width:118px;height:25px"><svg style="position:absolute;left:1px;top:4px" width="20" height="18" viewBox="0 0 20 18"><path d="M7.2 4 a3 3 0 0 1 6 0 v4.5 a3 3 0 0 1 -6 0 Z" fill="#d83a30"/><path d="M5 8 a5.2 5.2 0 0 0 10.4 0 M10.2 13.2 v2.3 M7.5 16 h5.4" fill="none" stroke="#d83a30" stroke-width="1.5"/><line x1="2" y1="16.6" x2="17" y2="1" stroke="#1c1c1e" stroke-width="3"/><line x1="2" y1="16.6" x2="17" y2="1" stroke="#d83a30" stroke-width="1.6"/></svg><span style="position:absolute;left:27px;top:3px">Sasha Vitko</span></div><div class="lbl" style="left:1701px;top:1005px;width:156px;height:25px"><svg style="position:absolute;left:1px;top:4px" width="20" height="18" viewBox="0 0 20 18"><path d="M7.2 4 a3 3 0 0 1 6 0 v4.5 a3 3 0 0 1 -6 0 Z" fill="#d83a30"/><path d="M5 8 a5.2 5.2 0 0 0 10.4 0 M10.2 13.2 v2.3 M7.5 16 h5.4" fill="none" stroke="#d83a30" stroke-width="1.5"/><line x1="2" y1="16.6" x2="17" y2="1" stroke="#1c1c1e" stroke-width="3"/><line x1="2" y1="16.6" x2="17" y2="1" stroke="#d83a30" stroke-width="1.6"/></svg><span style="position:absolute;left:27px;top:3px">Yevhen Kryshtop</span></div><div class="lbl" style="left:1491px;top:1122px;width:198px;height:25px"><svg style="position:absolute;left:1px;top:4px" width="20" height="18" viewBox="0 0 20 18"><path d="M7.2 4 a3 3 0 0 1 6 0 v4.5 a3 3 0 0 1 -6 0 Z" fill="#d83a30"/><path d="M5 8 a5.2 5.2 0 0 0 10.4 0 M10.2 13.2 v2.3 M7.5 16 h5.4" fill="none" stroke="#d83a30" stroke-width="1.5"/><line x1="2" y1="16.6" x2="17" y2="1" stroke="#1c1c1e" stroke-width="3"/><line x1="2" y1="16.6" x2="17" y2="1" stroke="#d83a30" stroke-width="1.6"/></svg><span style="position:absolute;left:27px;top:3px">Professional Associat...</span></div><div class="lbl" style="left:1701px;top:1122px;width:172px;height:25px"><svg style="position:absolute;left:1px;top:4px" width="20" height="18" viewBox="0 0 20 18"><path d="M7.2 4 a3 3 0 0 1 6 0 v4.5 a3 3 0 0 1 -6 0 Z" fill="#d83a30"/><path d="M5 8 a5.2 5.2 0 0 0 10.4 0 M10.2 13.2 v2.3 M7.5 16 h5.4" fill="none" stroke="#d83a30" stroke-width="1.5"/><line x1="2" y1="16.6" x2="17" y2="1" stroke="#1c1c1e" stroke-width="3"/><line x1="2" y1="16.6" x2="17" y2="1" stroke="#d83a30" stroke-width="1.6"/></svg><span style="position:absolute;left:27px;top:3px">Наталія Луговська</span></div>
<div class="big" style="left:1507px;top:841.4px;width:173px"><svg width="177" height="34" style="overflow:visible"><text x="0" y="25" font-family="Liberation Sans, sans-serif" font-size="25.5" fill="#fff" stroke="#fff" stroke-width="0.5" textLength="173" lengthAdjust="spacingAndGlyphs">Ruslan Popitc...</text></svg></div><div class="big" style="left:1716.4px;top:841.4px;width:170px"><svg width="174" height="34" style="overflow:visible"><text x="0" y="25" font-family="Liberation Sans, sans-serif" font-size="25.5" fill="#fff" stroke="#fff" stroke-width="0.5" textLength="170" lengthAdjust="spacingAndGlyphs">Денис Жалд...</text></svg></div><div class="big" style="left:1526px;top:959px;width:134px"><svg width="138" height="34" style="overflow:visible"><text x="0" y="25" font-family="Liberation Sans, sans-serif" font-size="25.5" fill="#fff" stroke="#fff" stroke-width="0.5" textLength="134" lengthAdjust="spacingAndGlyphs">Sasha Vitko</text></svg></div><div class="big" style="left:1716px;top:1076.6px;width:172px"><svg width="176" height="34" style="overflow:visible"><text x="0" y="25" font-family="Liberation Sans, sans-serif" font-size="25.5" fill="#fff" stroke="#fff" stroke-width="0.5" textLength="172" lengthAdjust="spacingAndGlyphs">Наталія Луго...</text></svg></div>
<svg class="abs" style="left:1498px;top:776px" width="26" height="46"><path d="M20 5 L6 23 L20 41" fill="none" stroke="rgba(200,200,200,0.55)" stroke-width="4" stroke-linecap="round"/></svg>
<svg class="abs" style="left:1870px;top:776px" width="26" height="46"><path d="M6 5 L20 23 L6 41" fill="none" stroke="rgba(235,235,235,0.9)" stroke-width="4" stroke-linecap="round"/></svg>
<!-- toolbar -->
<svg class="abs" style="left:42px;top:1179px" width="36" height="36"><path d="M12.5 3.5 a5.5 5.5 0 0 1 11 0 V17 a5.5 5.5 0 0 1 -11 0 Z" fill="none" stroke="#fff" stroke-width="2.2" transform="translate(0,2)"/><path d="M8 17 a10 10 0 0 0 20 0 M18 28 V33 M12.5 33 H23.5" fill="none" stroke="#fff" stroke-width="2.2"/><line x1="4" y1="32" x2="32" y2="4" stroke="#17181b" stroke-width="5"/><line x1="4.5" y1="31.5" x2="31.5" y2="4.5" stroke="#e8365d" stroke-width="3" stroke-linecap="round"/></svg>
<svg class="abs" style="left:96px;top:1192px" width="12" height="8"><path d="M1.5 6.5 L6 2 L10.5 6.5" fill="none" stroke="#9a9a9a" stroke-width="1.5"/></svg>
<div class="abs" style="left:-90px;top:1221px;width:300px;text-align:center;font-size:16.5px;line-height:20px;letter-spacing:0.25px;color:#d0d0d0;white-space:nowrap;-webkit-text-stroke:0.15px #d0d0d0">Звук</div>
<svg class="abs" style="left:158px;top:1185px" width="36" height="24"><rect x="2.5" y="2.5" width="20" height="18" rx="4.5" fill="none" stroke="#fff" stroke-width="2.2"/><path d="M23 11.5 L32.5 4.5 V18.5 Z" fill="none" stroke="#fff" stroke-width="2.2" stroke-linejoin="round"/></svg>
<svg class="abs" style="left:212px;top:1192px" width="12" height="8"><path d="M1.5 6.5 L6 2 L10.5 6.5" fill="none" stroke="#9a9a9a" stroke-width="1.5"/></svg>
<div class="abs" style="left:26px;top:1221px;width:300px;text-align:center;font-size:16.5px;line-height:20px;letter-spacing:0.25px;color:#d0d0d0;white-space:nowrap;-webkit-text-stroke:0.15px #d0d0d0">Видео</div>
<svg class="abs" style="left:510px;top:1184px" width="28" height="26"><circle cx="8" cy="6" r="3.8" fill="none" stroke="#fff" stroke-width="2"/><circle cx="19" cy="10" r="4.2" fill="none" stroke="#fff" stroke-width="2"/><path d="M2.5 22 C2.5 14 13 13 13 17" fill="none" stroke="#fff" stroke-width="2"/><rect x="11.5" y="16.5" width="14" height="7.5" rx="3.7" fill="none" stroke="#fff" stroke-width="2"/><path d="M2.5 22 L2.5 24 L11 24" fill="none" stroke="#fff" stroke-width="2"/></svg>
<div class="abs" style="left:544px;top:1186px;font-size:15.5px;line-height:20px;color:#d8d8d8">108</div>
<svg class="abs" style="left:587px;top:1192px" width="12" height="8"><path d="M1.5 6.5 L6 2 L10.5 6.5" fill="none" stroke="#9a9a9a" stroke-width="1.5"/></svg>
<div class="abs" style="left:373px;top:1221px;width:300px;text-align:center;font-size:16.5px;line-height:20px;letter-spacing:0.25px;color:#d0d0d0;white-space:nowrap;-webkit-text-stroke:0.15px #d0d0d0">Участники</div>
<svg class="abs" style="left:650px;top:1181px" width="33" height="32"><path d="M9 7 V5.5 a4 4 0 0 1 4 -4 H26 a4 4 0 0 1 4 4 V14 a4 4 0 0 1 -4 4 H25" fill="none" stroke="#fff" stroke-width="2"/><path d="M6.5 8 H21 a4.5 4.5 0 0 1 4.5 4.5 V20.5 a4.5 4.5 0 0 1 -4.5 4.5 H12 L7 29 V25 a4.5 4.5 0 0 1 -4.5 -4.5 V12.5 a4.5 4.5 0 0 1 4 -4.5 Z" fill="#17181b" stroke="#fff" stroke-width="2"/><circle cx="9" cy="16.5" r="1.4" fill="#fff"/><circle cx="14" cy="16.5" r="1.4" fill="#fff"/><circle cx="19" cy="16.5" r="1.4" fill="#fff"/></svg>
<svg class="abs" style="left:703px;top:1192px" width="12" height="8"><path d="M1.5 6.5 L6 2 L10.5 6.5" fill="none" stroke="#9a9a9a" stroke-width="1.5"/></svg>
<div class="abs" style="left:517px;top:1221px;width:300px;text-align:center;font-size:16.5px;line-height:20px;letter-spacing:0.25px;color:#d0d0d0;white-space:nowrap;-webkit-text-stroke:0.15px #d0d0d0">Чат</div>
<svg class="abs" style="left:778px;top:1182px" width="34" height="30"><path d="M17 27.5 C11 23 2 17 2 10 C2 5 5.5 2 9.5 2 C13 2 15.5 4 17 6.5 C18.5 4 21 2 24.5 2 C28.5 2 32 5 32 10 C32 17 23 23 17 27.5 Z" fill="none" stroke="#fff" stroke-width="2" transform="rotate(8 17 15)"/></svg>
<svg class="abs" style="left:843px;top:1192px" width="12" height="8"><path d="M1.5 6.5 L6 2 L10.5 6.5" fill="none" stroke="#9a9a9a" stroke-width="1.5"/></svg>
<div class="abs" style="left:645px;top:1221px;width:300px;text-align:center;font-size:16.5px;line-height:20px;letter-spacing:0.25px;color:#d0d0d0;white-space:nowrap;-webkit-text-stroke:0.15px #d0d0d0">Отреагировать</div>
<svg class="abs" style="left:907px;top:1183px" width="33" height="27"><rect x="0.5" y="0.5" width="32" height="26" rx="3.5" fill="#6ff092"/><path d="M16.5 6 V20 M10.5 12 L16.5 6 L22.5 12" fill="none" stroke="#101010" stroke-width="3" stroke-linecap="butt" stroke-linejoin="miter"/></svg>
<svg class="abs" style="left:959px;top:1192px" width="12" height="8"><path d="M1.5 6.5 L6 2 L10.5 6.5" fill="none" stroke="#9a9a9a" stroke-width="1.5"/></svg>
<div class="abs" style="left:773px;top:1221px;width:300px;text-align:center;font-size:16.5px;line-height:20px;letter-spacing:0.25px;color:#d0d0d0;white-space:nowrap;-webkit-text-stroke:0.15px #d0d0d0">Поделиться</div>
<svg class="abs" style="left:1087px;top:1182px" width="28" height="30"><path d="M14 2 C10 4 6 5 2.5 5 V14 C2.5 20 7 25 14 28 C21 25 25.5 20 25.5 14 V5 C22 5 18 4 14 2 Z" fill="none" stroke="#fff" stroke-width="2.2"/><path d="M6 8 C9 8 11 7 14 5.5 V15 H6 Z M14 15 H22 C21.5 19 18.5 22.5 14 24.5 Z" fill="#fff"/></svg>
<div class="abs" style="left:951px;top:1221px;width:300px;text-align:center;font-size:16.5px;line-height:20px;letter-spacing:0.25px;color:#d0d0d0;white-space:nowrap;-webkit-text-stroke:0.15px #d0d0d0">Инструменты организатора</div>
<svg class="abs" style="left:1267px;top:1180px" width="34" height="33"><path d="M16 5.1 Q18.3 15.3 28.3 17.6 Q18.3 19.9 16 30.1 Q13.7 19.9 3.7 17.6 Q13.7 15.3 16 5.1 Z" fill="none" stroke="#f2d45c" stroke-width="2.1" stroke-linejoin="round"/><path d="M26.6 1.8 Q27.5 5.9 31.8 6.8 Q27.5 7.7 26.6 11.8 Q25.7 7.7 21.4 6.8 Q25.7 5.9 26.6 1.8 Z" fill="#f2d45c" stroke="#f2d45c" stroke-width="0.8" stroke-linejoin="round"/></svg>
<div class="abs" style="left:1133px;top:1221px;width:300px;text-align:center;font-size:16.5px;line-height:20px;letter-spacing:0.25px;color:#d0d0d0;white-space:nowrap;-webkit-text-stroke:0.15px #d0d0d0">AI Companion</div>
<svg class="abs" style="left:1391px;top:1182px" width="32" height="30"><path d="M2 10 V6 a4 4 0 0 1 4 -4 H10 M30 18 V24 a4 4 0 0 1 -4 4 H22" fill="none" stroke="#fff" stroke-width="2.2"/><circle cx="23" cy="8" r="5" fill="none" stroke="#fff" stroke-width="2.2"/><circle cx="8" cy="23" r="5" fill="none" stroke="#fff" stroke-width="2.2"/></svg>
<svg class="abs" style="left:1444px;top:1192px" width="12" height="8"><path d="M1.5 6.5 L6 2 L10.5 6.5" fill="none" stroke="#9a9a9a" stroke-width="1.5"/></svg>
<div class="abs" style="left:1256px;top:1221px;width:300px;text-align:center;font-size:16.5px;line-height:20px;letter-spacing:0.25px;color:#d0d0d0;white-space:nowrap;-webkit-text-stroke:0.15px #d0d0d0">Приложения</div>
<svg class="abs" style="left:1520px;top:1180px" width="35" height="35"><circle cx="17.5" cy="17.5" r="15" fill="none" stroke="#fff" stroke-width="2.2"/><circle cx="11" cy="17.5" r="2" fill="#fff"/><circle cx="17.5" cy="17.5" r="2" fill="#fff"/><circle cx="24" cy="17.5" r="2" fill="#fff"/></svg>
<div class="abs" style="left:1387px;top:1221px;width:300px;text-align:center;font-size:16.5px;line-height:20px;letter-spacing:0.25px;color:#d0d0d0;white-space:nowrap;-webkit-text-stroke:0.15px #d0d0d0">Дополнительно</div>
<svg class="abs" style="left:1848px;top:1180px" width="36" height="36"><path d="M14 2 H32 V25 L21 32 V9 L32 2" fill="none" stroke="#e8365d" stroke-width="2.2" stroke-linejoin="miter"/><circle cx="11" cy="6.5" r="3.8" fill="#17181b" stroke="#fff" stroke-width="2"/><path d="M9 12 C5 14 3 17 5 19 C7 20 8 17 10 16 L7.5 24 L3.5 29 C3 31 5 32.5 6.5 31 L11 26 L13 31 C14 33 16.5 32 16 30 L14 22 L15.5 17 L17.5 20 C19 21 20 19.5 19 18 L15 12.5 C13 11 11 11 9 12 Z" fill="#17181b" stroke="#fff" stroke-width="1.8" stroke-linejoin="round"/></svg>
<div class="abs" style="left:1715px;top:1221px;width:300px;text-align:center;font-size:16.5px;line-height:20px;letter-spacing:0.25px;color:#d0d0d0;white-space:nowrap;-webkit-text-stroke:0.15px #d0d0d0">Выйти</div>
</body></html>
